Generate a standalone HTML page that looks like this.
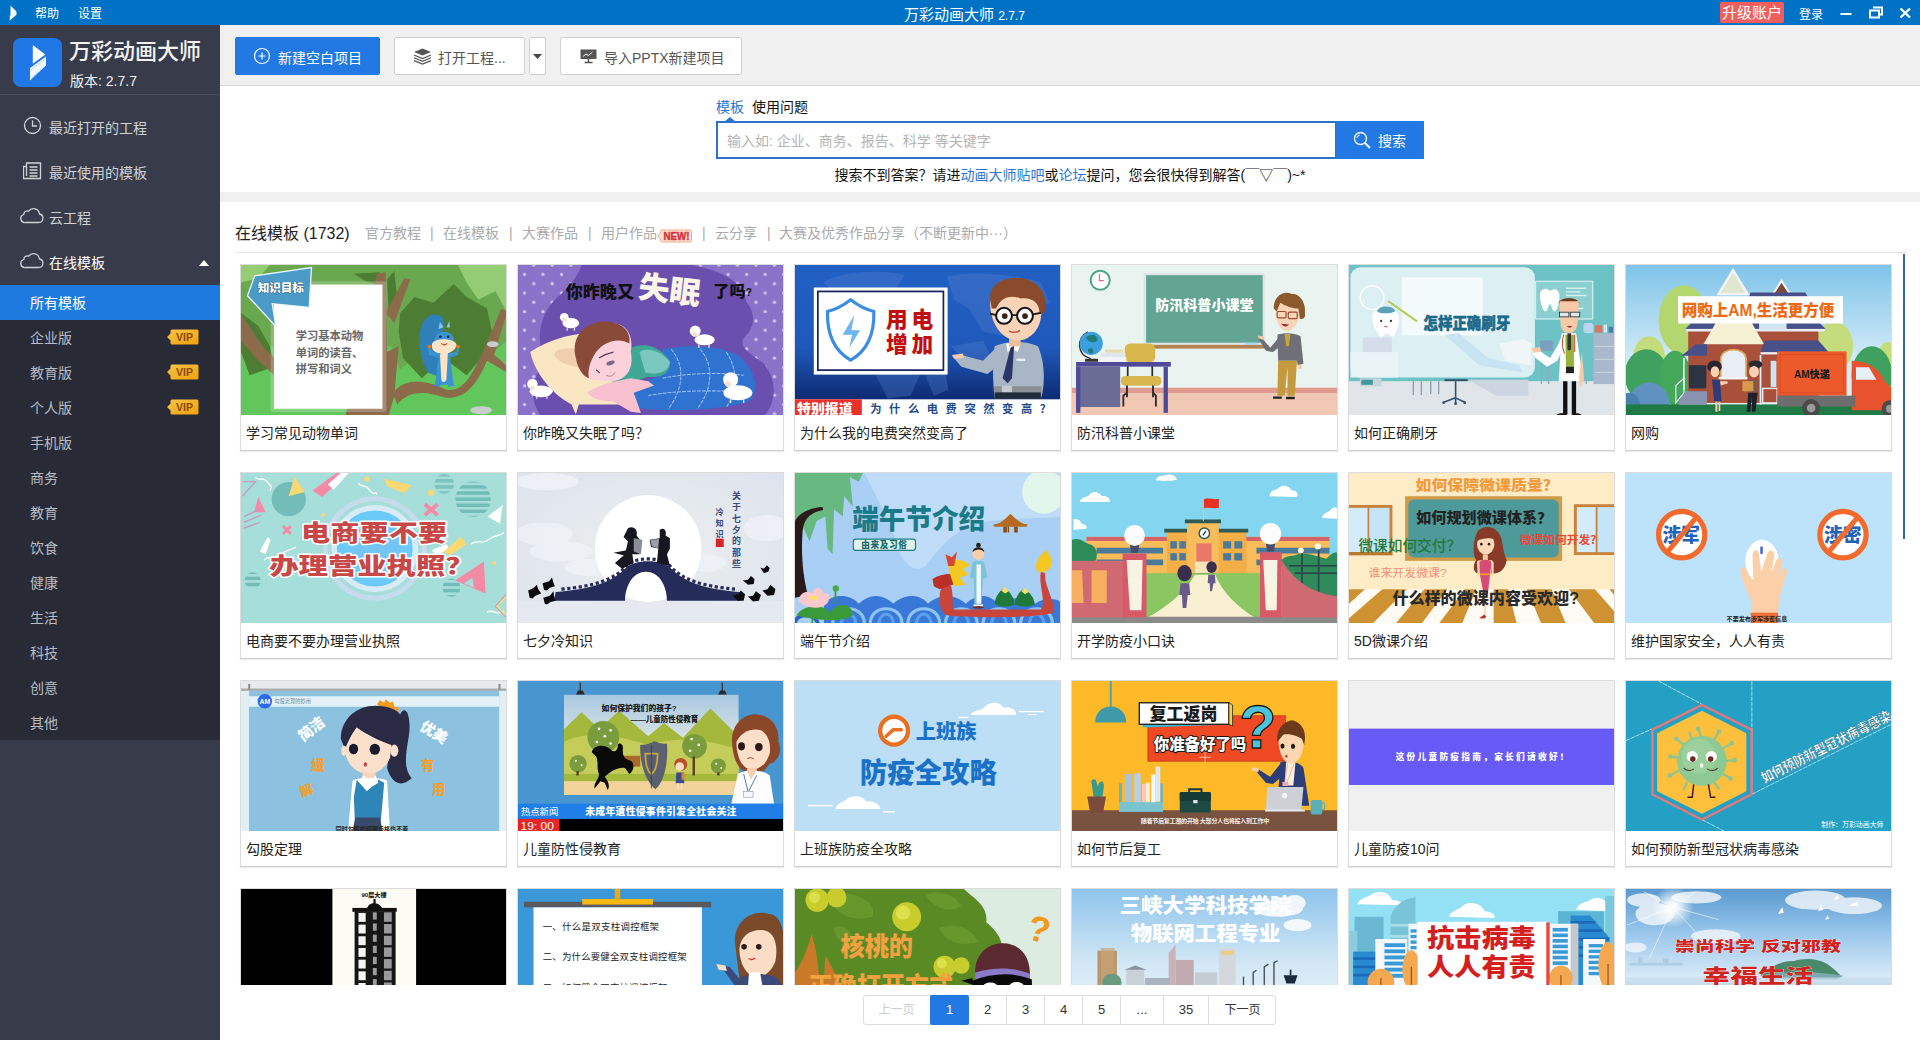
<!DOCTYPE html>
<html lang="zh-CN">
<head>
<meta charset="utf-8">
<title>万彩动画大师 2.7.7</title>
<style>
*{box-sizing:border-box;margin:0;padding:0}
html,body{width:1920px;height:1040px;overflow:hidden;background:#fff}
body{font-family:"Liberation Sans","Noto Sans CJK SC",sans-serif;font-size:14px;color:#222;position:relative}
.abs{position:absolute}
#titlebar{position:absolute;left:0;top:0;width:1920px;height:25px;background:#0072c6;color:#fff;font-size:12px;line-height:25px}
#titlebar span{position:absolute;white-space:nowrap;top:2px}
#sidebar{position:absolute;left:0;top:25px;width:220px;height:1015px;background:#383c4a;color:#d5d7dc}
#brand{position:absolute;left:0;top:0;width:220px;height:70px;border-bottom:1px solid #4b4f5c}
#logo{position:absolute;left:13px;top:13px;width:49px;height:49px;border-radius:8px;background:#1f78e6}
#brand .t1{position:absolute;left:69px;top:10px;font-size:22px;line-height:34px;color:#f2f2f2;white-space:nowrap;font-weight:500}
#brand .t2{position:absolute;left:70px;top:46px;font-size:14px;line-height:20px;color:#f2f2f2;white-space:nowrap}
.nav{position:absolute;left:0;width:220px;height:45px;line-height:45px;font-size:14px;color:#d0d2d8}
.nav .txt{position:absolute;left:49px;top:1px;white-space:nowrap}
.nav svg{position:absolute}
#submenu{position:absolute;left:0;top:260px;width:220px;height:455px;background:#282b36}
.sub{position:absolute;left:0;width:220px;height:35px;line-height:37px;font-size:14px;color:#b9bcc4;padding-left:30px}
.sub.on{background:#1f7ae0;color:#fff}
.vip{position:absolute;left:167px;top:9px;width:32px;height:16px}
#toolbar{position:absolute;left:220px;top:25px;width:1700px;height:61px;background:#f0f0f0;border-bottom:1px solid #dcdcdc}
.btn{position:absolute;top:12px;height:38px;border:1px solid #d0d0d0;border-radius:2px;background:#fff;color:#555;font-size:14px;line-height:36px;white-space:nowrap}
.btn.blue{background:#2279e4;border-color:#2279e4;color:#fff}
.btn span{position:absolute;top:2px}
.btn svg{position:absolute}
#search{position:absolute;left:220px;top:86px;width:1700px;height:106px;background:#fff}
#band{position:absolute;left:220px;top:192px;width:1700px;height:10px;background:#f0f0f0}
#main{position:absolute;left:220px;top:202px;width:1700px;height:783px;background:#fff;overflow:hidden}
#tabs{position:absolute;left:15px;top:0;height:51px;width:1671px;border-bottom:1px solid #e4e4e4;white-space:nowrap}
#tabs .h{position:absolute;left:0;top:20px;font-size:16px;line-height:24px;color:#222}
#tabs .t{position:absolute;top:21px;font-size:14px;line-height:20px;color:#aaa}
.card{position:absolute;width:267px;height:187px;background:#fff;border:1px solid #dcdcdc;border-bottom:1px solid #cfcfcf;box-shadow:0 1px 1px rgba(0,0,0,.08)}
.card svg{position:absolute;left:0;top:0;width:265px;height:150px;display:block}
.card .cap{position:absolute;left:5px;top:158px;font-size:14px;line-height:20px;color:#222;white-space:nowrap}
#pager{position:absolute;left:863px;top:995px;height:30px;width:413px;border:1px solid #ddd;border-radius:3px;background:#fff}
#pager div{position:absolute;top:-1px;height:30px;line-height:29px;text-align:center;font-size:13px;color:#333;border-right:1px solid #ddd}
#pager div.c{font-size:12px;line-height:31px}
#pager div.on{background:#2279e4;color:#fff;border-radius:2px;border-right:none}
svg text{font-family:"Liberation Sans","Noto Sans CJK SC",sans-serif}
</style>
</head>
<body>
<svg width="0" height="0" style="position:absolute"><defs><linearGradient id="vipg" x1="0" y1="0" x2="1" y2="1"><stop offset="0" stop-color="#f8c448"/><stop offset="1" stop-color="#f0a00c"/></linearGradient></defs></svg>
<div id="titlebar">
<svg class="abs" style="left:9px;top:5px" width="9" height="16" viewBox="0 0 9 16"><path d="M1.500 0.500L7.500 6.500L1.500 10.500ZM0.800 10.800L7.500 6.800V9.800L0.800 15.500Z" fill="#fff"/></svg>
<span style="left:35px">帮助</span><span style="left:78px">设置</span>
<span style="left:904px;font-size:15px;top:2px">万彩动画大师 <b style="font-weight:normal;font-size:12px">2.7.7</b></span>
<span style="left:1720px;top:2px;width:64px;height:21px;line-height:22px;background:#f25e5e;border-radius:2px;font-size:15px;text-align:center">升级账户</span>
<span style="left:1799px;top:3px">登录</span>
<svg class="abs" style="left:1840px;top:6px" width="75" height="14" viewBox="0 0 75 14"><rect x="0.5" y="7" width="11" height="2" fill="#fff"/><path d="M33 1.5h9v7h-3M30 4.500h9v7h-9z" fill="none" stroke="#fff" stroke-width="2"/><path d="M60.500 2.500l9.500 9M70 2.500l-9.500 9" stroke="#fff" stroke-width="2.400"/></svg>
</div>

<div id="sidebar">
<div id="brand">
<div id="logo"><svg width="49" height="49" viewBox="0 0 49 49"><path d="M19.800 7L32.300 16.600L19.800 25.800Z" fill="#fff"/><path d="M17 30L33 18.400V27.500L17 42.500Z" fill="#f2f6ff"/><path d="M18.500 31.200L31.500 21.800M18.500 40L31.500 29.500" stroke="#1f78e6" stroke-width="1" stroke-dasharray="1.200 1.600" opacity=".55"/></svg></div>
<div class="t1">万彩动画大师</div>
<div class="t2">版本: 2.7.7</div>
</div>
<div class="nav" style="top:80px"><svg style="left:23px;top:11px" width="19" height="19" viewBox="0 0 19 19"><circle cx="9.500" cy="9.500" r="8" fill="none" stroke="#d0d2d8" stroke-width="1.300"/><path d="M9.500 4.500v5.500h4.500" fill="none" stroke="#d0d2d8" stroke-width="1.300"/></svg><span class="txt">最近打开的工程</span></div>
<div class="nav" style="top:125px"><svg style="left:23px;top:12px" width="19" height="18" viewBox="0 0 19 18"><path d="M3.500 1h14v15.500h-17v-12h3zM3.500 1v13" fill="none" stroke="#d0d2d8" stroke-width="1.300"/><path d="M6.500 5h8M6.500 8h8M6.500 11h8M6.500 14h8" stroke="#d0d2d8" stroke-width="1.500"/></svg><span class="txt">最近使用的模板</span></div>
<div class="nav" style="top:170px"><svg style="left:20px;top:11px" width="24" height="18" viewBox="0 0 24 18"><path d="M5.500 16.500h13a4.300 4.300 0 0 0 1-8.500a6 6 0 0 0-10.800-2.800a3.400 3.400 0 0 0-4.900 3.300A4.100 4.100 0 0 0 5.500 16.500z" fill="none" stroke="#d0d2d8" stroke-width="1.300"/></svg><span class="txt">云工程</span></div>
<div class="nav" style="top:215px"><svg style="left:20px;top:11px" width="24" height="18" viewBox="0 0 24 18"><path d="M5.500 16.500h13a4.300 4.300 0 0 0 1-8.500a6 6 0 0 0-10.800-2.800a3.400 3.400 0 0 0-4.900 3.300A4.100 4.100 0 0 0 5.500 16.500z" fill="none" stroke="#d0d2d8" stroke-width="1.300"/></svg><span class="txt" style="color:#fff">在线模板</span><svg style="left:199px;top:20px" width="10" height="6" viewBox="0 0 12 7"><path d="M0 7L6 0L12 7Z" fill="#fff"/></svg></div>
<div id="submenu">
<div class="sub on" style="top:0">所有模板</div>
<div class="sub" style="top:35px">企业版<svg class="vip" viewBox="0 0 32 16"><path d="M0 8L3.500 4.500V2a1.500 1.500 0 0 1 1.500-1.500H30a1.500 1.500 0 0 1 1.500 1.500V14a1.500 1.500 0 0 1-1.500 1.500H5a1.500 1.500 0 0 1-1.500-1.500V11.500Z" fill="url(#vipg)"/><text x="17.500" y="12" font-size="10.500" font-weight="bold" fill="#8a4a00" text-anchor="middle">VIP</text></svg></div>
<div class="sub" style="top:70px">教育版<svg class="vip" viewBox="0 0 32 16"><path d="M0 8L3.500 4.500V2a1.500 1.500 0 0 1 1.500-1.500H30a1.500 1.500 0 0 1 1.500 1.500V14a1.500 1.500 0 0 1-1.500 1.500H5a1.500 1.500 0 0 1-1.500-1.500V11.500Z" fill="url(#vipg)"/><text x="17.500" y="12" font-size="10.500" font-weight="bold" fill="#8a4a00" text-anchor="middle">VIP</text></svg></div>
<div class="sub" style="top:105px">个人版<svg class="vip" viewBox="0 0 32 16"><path d="M0 8L3.500 4.500V2a1.500 1.500 0 0 1 1.500-1.500H30a1.500 1.500 0 0 1 1.500 1.500V14a1.500 1.500 0 0 1-1.500 1.500H5a1.500 1.500 0 0 1-1.500-1.500V11.500Z" fill="url(#vipg)"/><text x="17.500" y="12" font-size="10.500" font-weight="bold" fill="#8a4a00" text-anchor="middle">VIP</text></svg></div>
<div class="sub" style="top:140px">手机版</div>
<div class="sub" style="top:175px">商务</div>
<div class="sub" style="top:210px">教育</div>
<div class="sub" style="top:245px">饮食</div>
<div class="sub" style="top:280px">健康</div>
<div class="sub" style="top:315px">生活</div>
<div class="sub" style="top:350px">科技</div>
<div class="sub" style="top:385px">创意</div>
<div class="sub" style="top:420px">其他</div>
</div>
</div>

<div id="toolbar">
<div class="btn blue" style="left:15px;width:145px"><svg style="left:17px;top:9px" width="18" height="18" viewBox="0 0 18 18"><circle cx="9" cy="9" r="7.500" fill="none" stroke="#fff" stroke-width="1.200"/><path d="M9 5.500v7M5.500 9h7" stroke="#fff" stroke-width="1.200"/></svg><span style="left:42px">新建空白项目</span></div>
<div class="btn" style="left:174px;width:131px"><svg style="left:18px;top:10px" width="19" height="17" viewBox="0 0 19 17"><path d="M9.500 0.500L18 4L9.500 7.500L1 4Z" fill="#555"/><path d="M1 7L9.500 10.500L18 7M1 9.800L9.500 13.300L18 9.800M1 12.600L9.500 16.100L18 12.600" fill="none" stroke="#555" stroke-width="1.200"/></svg><span style="left:43px">打开工程...</span></div>
<div class="btn" style="left:309px;width:17px"><svg style="left:3px;top:16px" width="9" height="5" viewBox="0 0 9 5"><path d="M0 0H9L4.500 5Z" fill="#444"/></svg></div>
<div class="btn" style="left:340px;width:182px"><svg style="left:19px;top:11px" width="17" height="15" viewBox="0 0 17 15"><rect x="0.500" y="0.500" width="16" height="9.500" fill="#555"/><path d="M3 7.500l3-2.500l2.500 1.500l4-3.500" stroke="#fff" stroke-width="1" fill="none"/><path d="M8.500 10v3M4.500 13.500h8" stroke="#555" stroke-width="1.600"/></svg><span style="left:43px">导入PPTX新建项目</span></div>
</div>

<div id="search">
<span class="abs" style="left:496px;top:11px;line-height:20px;color:#2a78d2">模板</span>
<span class="abs" style="left:532px;top:11px;line-height:20px;color:#111">使用问题</span>
<svg class="abs" style="left:504px;top:31px" width="12" height="5" viewBox="0 0 12 5"><path d="M0 5L6 0L12 5Z" fill="#2a72cc"/></svg>
<div class="abs" style="left:496px;top:35px;width:621px;height:38px;border:2px solid #2a72cc;background:#fff"></div>
<span class="abs" style="left:507px;top:45px;line-height:20px;color:#b4b4b4;white-space:nowrap">输入如: 企业、商务、报告、科学 等关键字</span>
<div class="abs" style="left:1116px;top:35px;width:88px;height:38px;background:#2279e4;color:#fff;line-height:38px"><svg class="abs" style="left:17px;top:10px" width="18" height="18" viewBox="0 0 18 18"><circle cx="7.500" cy="7.500" r="6" fill="none" stroke="#fff" stroke-width="1.300"/><path d="M3.800 7a3.800 3.800 0 0 1 3-3" fill="none" stroke="#fff" stroke-width="1"/><path d="M12 12l5 5" stroke="#fff" stroke-width="1.800"/></svg><span class="abs" style="left:42px;top:1px">搜索</span></div>
<div class="abs" style="left:0;top:79px;width:1700px;text-align:center;line-height:20px;color:#111;white-space:nowrap">搜索不到答案？请进<span style="color:#2a78d2">动画大师贴吧</span>或<span style="color:#2a78d2">论坛</span>提问，您会很快得到解答(￣▽￣)~*</div>
</div>
<div id="band"></div>

<div id="main">
<div id="tabs">
<span class="h">在线模板 (1732)</span>
<span class="t" style="left:130px">官方教程</span><span class="t" style="left:195px">|</span>
<span class="t" style="left:208px">在线模板</span><span class="t" style="left:274px">|</span>
<span class="t" style="left:287px">大赛作品</span><span class="t" style="left:353px">|</span>
<span class="t" style="left:366px">用户作品</span>
<svg class="abs" style="left:422px;top:25px" width="36" height="16" viewBox="0 0 36 16"><path d="M0.500 9L3.500 6V4.500a1.500 1.500 0 0 1 1.500-1.500H33a1.500 1.500 0 0 1 1.500 1.500V13.500a1.500 1.500 0 0 1-1.500 1.500H5a1.500 1.500 0 0 1-1.500-1.500V12Z" fill="#fde6d6" stroke="#f0a888" stroke-width="1"/><text x="19.500" y="12.600" font-size="10.500" font-weight="bold" fill="#d8303e" stroke="#d8303e" stroke-width=".5" text-anchor="middle" textLength="26" lengthAdjust="spacingAndGlyphs">NEW!</text></svg>
<span class="t" style="left:467px">|</span>
<span class="t" style="left:480px">云分享</span><span class="t" style="left:532px">|</span>
<span class="t" style="left:544px">大赛及优秀作品分享（不断更新中···）</span>
</div>
<div class="card" style="left:20px;top:62px"><svg viewBox="0 0 266 150" preserveAspectRatio="none"><g transform="scale(0.1452)">
<rect width="1840" height="1040" fill="#62c65c"/>
<path d="M0 0H1840V520L1700 640L1560 560L1420 700L1250 600L1100 720L1040 560L0 560Z" fill="#6aa84f"/>
<path d="M1100 330L1200 220L1330 260L1470 130L1560 220L1700 300L1740 480L1700 600L1560 760L1400 640L1250 780L1120 640L1090 460Z" fill="#4c7d33"/><path d="M1010 100L1060 40L1080 240L1020 300Z" fill="#4c7d33"/>
<path d="M0 330L120 420L200 560L230 700L60 760L0 600Z" fill="#4c7d33"/>
<path d="M1500 0H1840V330L1760 180L1640 240L1560 120Z" fill="#93cc72"/>
<path d="M0 0H200L120 90L0 120Z" fill="#93cc72"/>
<path d="M780 60L960 50L940 130L860 110Z" fill="#4c7d33"/>
<path d="M940 60L1000 50L1010 600L1090 560L1060 900L1020 1040H720L760 900Z" fill="#8b6b4a"/>
<path d="M1000 330L1130 90L1170 100L1060 400Z" fill="#8b6b4a"/>
<path d="M1050 880C1150 760 1300 800 1420 860C1560 880 1620 700 1690 560L1800 300L1840 320L1750 620C1800 660 1840 680 1840 740L1700 660C1640 800 1560 940 1400 910C1280 870 1160 860 1080 960Z" fill="#8b6b4a"/>
<path d="M0 340L150 560L230 640V760L100 640L0 520Z" fill="#8b6b4a"/>
<ellipse cx="1660" cy="1000" rx="75" ry="28" fill="#c9cdd0"/>
<ellipse cx="1740" cy="545" rx="40" ry="20" fill="#c9cdd0"/>
<path d="M1290 740C1200 560 1220 360 1330 340C1400 335 1420 400 1400 440L1360 520L1400 780Z" fill="#2f7fb8"/>
<path d="M1340 520C1330 440 1480 440 1470 520C1500 560 1470 600 1440 600L1470 820L1340 830L1370 600C1320 600 1310 560 1340 520Z" fill="#3b93cf"/>
<path d="M1365 440L1375 390L1400 430ZM1445 430L1440 385L1420 430Z" fill="#8cc4e8"/>
<path d="M1320 545C1330 500 1470 500 1490 545C1490 590 1440 600 1430 610L1420 790C1410 810 1390 810 1385 790L1375 610C1340 600 1315 590 1320 545Z" fill="#fbe3c5"/>
<path d="M1290 560L1330 600L1380 610L1370 640L1300 620ZM1510 560L1480 600L1430 610L1440 640L1500 620Z" fill="#3b93cf"/>
<circle cx="1303" cy="562" r="13" fill="#e8742c"/><circle cx="1500" cy="562" r="13" fill="#e8742c"/>
<path d="M1325 830L1370 800L1380 840ZM1480 830L1440 800L1430 840Z" fill="#3b93cf"/>
<circle cx="1378" cy="495" r="9" fill="#1c2a44"/><circle cx="1432" cy="495" r="9" fill="#1c2a44"/>
<path d="M1385 540Q1405 560 1425 540" stroke="#b8452a" stroke-width="7" fill="none"/>
<rect x="205" y="112" width="800" height="900" rx="14" fill="#fff" opacity=".22"/>
<rect x="228" y="135" width="750" height="855" fill="#fff"/>
<path d="M45 212L95 75L487 18L472 292L216 266L240 422Z" fill="#4a9bc8" stroke="#eaf6fb" stroke-width="9" stroke-linejoin="miter"/>
<text x="275" y="188" font-size="80" font-weight="900" fill="#fff" stroke="#2b4a5c" stroke-width="5" paint-order="stroke" text-anchor="middle">知识目标</text>
<text x="378" y="514" font-size="78" font-weight="700" fill="#666">学习基本动物</text>
<text x="378" y="632" font-size="78" font-weight="700" fill="#666">单词的读音、</text>
<text x="378" y="746" font-size="78" font-weight="700" fill="#666">拼写和词义</text>
</g></svg><div class="cap">学习常见动物单词</div></div>
<div class="card" style="left:297px;top:62px"><svg viewBox="0 0 266 150" preserveAspectRatio="none"><defs><pattern id="dots1" width="128" height="128" patternUnits="userSpaceOnUse"><circle cx="45" cy="65" r="11" fill="#d6caf2"/><circle cx="109" cy="129" r="11" fill="#d6caf2"/><circle cx="109" cy="1" r="11" fill="#d6caf2"/></pattern></defs>
<g transform="scale(0.1452)">
<rect width="1840" height="1040" fill="#8a72c8"/>
<rect width="1840" height="1040" fill="url(#dots1)"/>
<path d="M440 0H1200C1420 40 1560 120 1580 260C1640 320 1640 420 1580 480C1500 560 1600 600 1700 680C1800 800 1780 960 1700 1040H160C60 900 100 760 200 660C100 520 160 300 300 200C380 120 420 60 440 0Z" fill="#6a4fae"/>
<path d="M85 600C200 520 340 480 470 470L760 560L820 960L420 960L400 1030L370 960C250 900 120 760 85 600Z" fill="#fbe6c4"/>
<ellipse cx="400" cy="640" rx="150" ry="60" fill="#efcfae" transform="rotate(12 400 640)"/>
<path d="M1000 580C1200 540 1400 560 1520 620C1640 720 1680 860 1600 940C1400 1000 1100 1010 860 990L740 940L640 880L1000 760Z" fill="#2f72cf"/>
<path d="M1060 580C1160 700 1140 860 1040 990M1260 580C1360 700 1340 860 1240 990M1440 600C1520 720 1520 860 1440 980M1000 780C1200 740 1400 740 1560 760M900 900C1100 860 1400 860 1620 880" stroke="#9cc3f5" stroke-width="7" fill="none" stroke-dasharray="26 8"/>
<path d="M780 570C880 530 980 560 1050 660C1060 740 1000 780 900 770L760 820L640 860L610 840L770 700Z" fill="#3fa894"/>
<path d="M840 600C900 560 1000 600 1050 670C1040 740 960 760 880 740Z" fill="#7cc8c0"/>
<path d="M420 620C420 500 520 400 640 400C760 400 800 500 780 600C800 700 760 790 660 800L500 790C440 740 420 680 420 620Z" fill="#fbd2dc"/>
<path d="M400 640C360 480 480 380 620 390C740 400 780 470 770 540C700 500 600 520 540 600C500 660 480 720 490 780C440 760 410 700 400 640Z" fill="#8a4a3a"/>
<path d="M560 640Q610 610 660 600M540 720L565 745" stroke="#5a3a5a" stroke-width="8" fill="none"/>
<ellipse cx="640" cy="675" rx="30" ry="14" fill="#7a6a8a" transform="rotate(-20 640 675)"/>
<path d="M610 760Q650 780 670 740" stroke="#c86a7a" stroke-width="6" fill="none"/>
<path d="M480 880C560 820 680 800 780 780L900 800L940 830L800 880L850 1020L780 1010L660 940C580 940 500 920 480 880Z" fill="#f9c0d0"/>
<g fill="#fff"><ellipse cx="365" cy="400" rx="58" ry="36"/><circle cx="320" cy="360" r="30"/><ellipse cx="1290" cy="515" rx="70" ry="38"/><circle cx="1225" cy="455" r="38"/><ellipse cx="1520" cy="880" rx="100" ry="52"/><circle cx="1470" cy="790" r="52"/><ellipse cx="160" cy="870" rx="80" ry="40"/><circle cx="100" cy="820" r="36"/></g>
<g fill="#fbe0c8"><circle cx="318" cy="378" r="14"/><circle cx="1222" cy="478" r="16"/><circle cx="1452" cy="820" r="20"/><circle cx="100" cy="846" r="15"/></g>
<path d="M340 430v22M390 430v22M1250 545v26M1320 545v26M1470 920v30M1560 920v30M130 900v22M200 900v22" stroke="#e8e0f0" stroke-width="9"/>
<text x="330" y="228" font-size="118" font-weight="900" fill="#111" font-family="'Noto Serif CJK SC','Liberation Serif',serif">你昨晚又</text>
<text x="1350" y="222" font-size="112" font-weight="900" fill="#111" font-family="'Noto Serif CJK SC','Liberation Serif',serif">了吗<tspan font-size="70" dy="-6">?</tspan></text>
<text x="830" y="250" font-size="215" font-weight="900" fill="#fdf6e8" font-family="'Noto Sans CJK SC',sans-serif" transform="rotate(7 1050 200)">失眠</text>
</g></svg><div class="cap">你昨晚又失眠了吗？</div></div>
<div class="card" style="left:574px;top:62px"><svg viewBox="0 0 266 150" preserveAspectRatio="none"><defs><linearGradient id="g2" x1="0" y1="0" x2="0" y2="1"><stop offset="0" stop-color="#2260c4"/><stop offset=".55" stop-color="#1f58ba"/><stop offset="1" stop-color="#081c5c"/></linearGradient></defs>
<g transform="scale(0.1452)">
<rect width="1840" height="1040" fill="url(#g2)"/>
<g fill="#5a86d0" opacity=".3"><path d="M200 120C320 40 600 30 760 70L700 160L560 200L400 160L280 200Z"/><path d="M1050 80C1200 40 1500 60 1700 120L1760 260L1600 330L1500 500L1300 460L1200 300L1100 240Z"/><path d="M560 760L720 700L860 760L800 900L640 920Z"/><path d="M1080 560L1300 520L1360 640L1200 700Z"/><path d="M900 760L1040 740L1060 860L960 900Z"/></g>
<rect x="130" y="155" width="925" height="600" fill="#fff"/>
<rect x="158" y="182" width="868" height="542" fill="none" stroke="#16255f" stroke-width="12"/>
<path d="M385 240C450 290 500 310 545 320C550 480 500 590 385 655C270 590 220 480 225 320C270 310 320 290 385 240Z" fill="#fff" stroke="#3a8de0" stroke-width="22"/>
<path d="M410 345L330 480H395L375 570L450 450H390Z" fill="#6fb5ee"/>
<text x="630" y="425" font-size="150" font-weight="900" fill="#c01010" letter-spacing="26">用电</text>
<text x="630" y="600" font-size="150" font-weight="900" fill="#c01010" letter-spacing="26">增加</text>
<path d="M1380 560C1460 520 1600 520 1680 560C1740 700 1720 860 1700 920H1380C1370 820 1360 700 1380 560Z" fill="#a9b6c6"/>
<path d="M1390 570L1300 660L1150 620L1090 630L1150 700L1330 750L1420 680Z" fill="#a9b6c6"/>
<path d="M1085 620L1160 610L1170 640L1100 645Z" fill="#f6c9a8"/>
<path d="M1460 540L1560 540L1540 600L1500 580L1470 600Z" fill="#fff"/>
<path d="M1490 570L1515 555L1500 780L1470 815L1435 780Z" fill="#2a3568"/>
<rect x="1375" y="835" width="330" height="42" fill="#8b8f96"/><rect x="1430" y="832" width="70" height="48" fill="#c8ccd2"/>
<rect x="1380" y="877" width="320" height="45" fill="#1e2c3c"/>
<rect x="1530" y="645" width="60" height="16" fill="#e8edf2"/>
<path d="M1480 470H1560V560H1480Z" fill="#eebf9c"/>
<path d="M1350 290C1340 180 1440 110 1560 130C1680 150 1720 260 1700 360C1690 450 1620 520 1540 520C1440 520 1360 420 1350 290Z" fill="#f8d3b5"/>
<path d="M1350 240C1340 130 1440 80 1560 90C1700 110 1760 220 1720 340L1690 330C1690 260 1640 220 1560 230C1480 200 1420 230 1390 300L1360 300Z" fill="#8a4a2c"/>
<circle cx="1445" cy="350" r="55" fill="#fff" stroke="#15151c" stroke-width="14"/><circle cx="1590" cy="350" r="55" fill="#fff" stroke="#15151c" stroke-width="14"/>
<path d="M1500 345H1535M1645 340L1700 330M1390 345L1350 335" stroke="#15151c" stroke-width="12"/>
<circle cx="1450" cy="352" r="20" fill="#3a2418"/><circle cx="1590" cy="352" r="20" fill="#3a2418"/>
<path d="M1480 455Q1520 475 1555 450" stroke="#b0503a" stroke-width="10" fill="none"/>
<rect x="0" y="925" width="1840" height="115" fill="#fff"/>
<rect x="0" y="925" width="462" height="115" fill="#e8302c"/>
<text x="14" y="1022" font-size="88" font-weight="900" fill="#fff" textLength="385" lengthAdjust="spacingAndGlyphs">特别报道</text>
<text x="520" y="1022" font-size="78" font-weight="700" fill="#1c4a8a" textLength="1250" lengthAdjust="spacing">为什么电费突然变高？</text>
</g></svg><div class="cap">为什么我的电费突然变高了</div></div>
<div class="card" style="left:851px;top:62px"><svg viewBox="0 0 266 150" preserveAspectRatio="none"><g transform="scale(0.1452)">
<rect width="1840" height="1040" fill="#e9f4f0"/>
<rect x="0" y="845" width="1840" height="40" fill="#e09a8e"/>
<rect x="0" y="885" width="1840" height="155" fill="#f0c8b4"/>
<circle cx="195" cy="105" r="66" fill="#fff" stroke="#4fa58a" stroke-width="14"/>
<path d="M190 60V108H220" stroke="#e86a7a" stroke-width="8" fill="none"/>
<rect x="495" y="55" width="840" height="500" fill="#dde6e4"/>
<rect x="512" y="70" width="806" height="465" fill="#62a592"/>
<rect x="560" y="550" width="800" height="26" fill="#b5834f"/>
<rect x="1200" y="536" width="85" height="14" fill="#a8d8f0"/>
<text x="915" y="312" font-size="92" font-weight="900" fill="#fff" text-anchor="middle" textLength="680" lengthAdjust="spacingAndGlyphs">防汛科普小课堂</text>
<rect x="365" y="540" width="210" height="130" rx="36" fill="#d8b74c"/>
<path d="M385 670V780M555 670V780" stroke="#2e2e2e" stroke-width="12"/>
<rect x="338" y="765" width="280" height="66" rx="30" fill="#d8b74c"/>
<path d="M380 830V880L355 900V975M560 830V880L580 900V975M380 850V910M560 850V910" stroke="#2e2e2e" stroke-width="13" fill="none"/>
<rect x="28" y="668" width="655" height="32" fill="#4f4a98"/>
<rect x="28" y="700" width="305" height="278" fill="#6a6c96"/>
<rect x="28" y="700" width="30" height="318" fill="#4f4a98"/>
<rect x="633" y="700" width="30" height="318" fill="#4f4a98"/>
<rect x="228" y="582" width="125" height="22" fill="#e8dcae"/>
<rect x="200" y="606" width="170" height="28" fill="#dfe6ec"/>
<rect x="186" y="634" width="190" height="30" fill="#f2f4f6"/>
<path d="M110 460C30 500 30 620 130 645" stroke="#333" stroke-width="10" fill="none"/>
<circle cx="133" cy="540" r="80" fill="#3b9fe0"/>
<path d="M95 500C130 470 180 480 175 520C150 540 120 540 95 500ZM110 580C140 560 160 590 140 610C120 610 110 600 110 580Z" fill="#1f7a78"/>
<rect x="90" y="645" width="90" height="22" rx="6" fill="#333"/>
<path d="M1420 480C1470 465 1530 465 1580 490L1600 680L1560 690L1555 660H1425Z" fill="#6f6f78"/>
<path d="M1430 500L1370 570L1310 500L1290 510L1340 590L1390 600L1440 560Z" fill="#6f6f78"/>
<path d="M1285 485L1330 495L1320 515L1290 505Z" fill="#f5c8a4"/>
<path d="M1470 475H1510L1500 560L1480 560Z" fill="#c9a23c"/>
<path d="M1425 660H1555L1540 900H1490L1490 700L1470 900H1420Z" fill="#c59a3e"/>
<path d="M1390 905H1450V922H1390ZM1480 908H1540V925H1480Z" fill="#222"/>
<rect x="1565" y="685" width="22" height="30" fill="#f5c8a4"/>
<path d="M1410 330C1400 250 1460 220 1510 225C1560 230 1580 280 1570 350C1560 420 1520 460 1480 455C1440 450 1415 400 1410 330Z" fill="#f8d5b8"/>
<path d="M1395 300C1390 220 1460 170 1520 200C1570 190 1620 260 1610 330C1620 360 1590 380 1575 370L1565 300C1520 300 1470 280 1440 260L1415 320Z" fill="#8a5a2c"/>
<rect x="1418" y="320" width="62" height="44" rx="8" fill="none" stroke="#9a4a2a" stroke-width="8"/><rect x="1495" y="325" width="62" height="44" rx="8" fill="none" stroke="#9a4a2a" stroke-width="8"/>
<path d="M1445 405Q1475 440 1500 410Z" fill="#a02a2a"/>
</g></svg><div class="cap">防汛科普小课堂</div></div>
<div class="card" style="left:1128px;top:62px"><svg viewBox="0 0 266 150" preserveAspectRatio="none"><g transform="scale(0.1452)">
<rect width="1840" height="1040" fill="#6cc2c4"/>
<rect x="0" y="800" width="1840" height="240" fill="#dfe5e8"/>
<rect x="1290" y="112" width="395" height="260" fill="#8ccfd0" stroke="#d8f0f0" stroke-width="8"/>
<path d="M1320 200C1330 150 1380 160 1390 180C1410 160 1450 160 1455 210C1455 260 1440 320 1420 320C1405 320 1400 270 1390 270C1378 270 1375 320 1358 320C1340 320 1320 260 1320 200Z" fill="#fff"/>
<path d="M1500 160H1640M1500 185H1600M1500 210H1640M1500 300H1620" stroke="#d8f0f0" stroke-width="10"/>
<rect x="1690" y="470" width="150" height="350" fill="#a9b8cc"/>
<path d="M1700 560H1840M1700 650H1840M1700 740H1840" stroke="#c5d0de" stroke-width="8"/>
<rect x="1620" y="400" width="70" height="70" rx="20" fill="#b8d8f0"/><rect x="1700" y="415" width="50" height="50" fill="#e8705a"/><rect x="1760" y="410" width="24" height="55" fill="#d0e8f0"/><rect x="1795" y="425" width="30" height="40" fill="#4a7ab0"/>
<path d="M1330 640V820M1380 640V820M1640 780V820" stroke="#8fb0b8" stroke-width="10"/>
<rect x="1320" y="520" width="90" height="70" fill="#7aa0c0"/>
<rect x="660" y="786" width="160" height="14" fill="#34506e"/>
<path d="M737 800V915M737 915L655 945M737 915L800 945M737 915V950" stroke="#34506e" stroke-width="11" fill="none"/>
<circle cx="655" cy="948" r="10" fill="#34506e"/><circle cx="800" cy="948" r="10" fill="#34506e"/><circle cx="737" cy="955" r="10" fill="#34506e"/>
<path d="M445 800V895M500 800V895M565 800V890M620 800V890" stroke="#8a9cb0" stroke-width="9"/>
<path d="M820 790H1240V900H1020Z" fill="#cdd5e0"/>
<rect x="75" y="780" width="150" height="55" fill="#c8d4dc"/><rect x="85" y="790" width="80" height="35" fill="#3f9a9c"/>
<rect x="10" y="15" width="1275" height="760" rx="70" fill="#e4f3f6" opacity=".93"/>
<rect x="365" y="85" width="560" height="400" fill="#f3fafc"/>
<path d="M660 480L900 690L1200 740L1180 690L960 640L760 470Z" fill="#c8e4f2"/>
<path d="M1040 540L1200 510L1260 540V690L1080 660Z" fill="#f0f6f8"/>
<rect x="95" y="500" width="200" height="110" fill="#d5dcea"/>
<rect x="10" y="600" width="330" height="175" fill="#e9f3f6"/>
<circle cx="160" cy="225" r="82" fill="none" stroke="#fff" stroke-width="9"/>
<path d="M165 330C200 300 300 300 340 335C360 400 330 440 310 490C290 500 275 470 262 470C248 470 235 500 215 492C190 450 150 400 165 330Z" fill="#fff"/>
<path d="M195 320C200 280 290 270 320 315C310 335 215 340 195 320Z" fill="#5ba3b4"/>
<circle cx="222" cy="385" r="8" fill="#334"/><circle cx="290" cy="385" r="8" fill="#334"/><path d="M240 420Q255 440 272 420Z" fill="#e0607a"/>
<path d="M270 248L470 388" stroke="#b4cc4e" stroke-width="14"/>
<text x="515" y="440" font-size="110" font-weight="900" fill="#1c6a8a" stroke="#1c6a8a" stroke-width="4" textLength="600" lengthAdjust="spacingAndGlyphs">怎样正确刷牙</text>
<path d="M1475 480L1440 560L1390 640L1330 600L1310 570L1260 585L1290 640L1370 700L1440 660L1470 600Z" fill="#fff"/>
<path d="M1258 575L1320 565L1330 600L1275 605Z" fill="#f6caa6"/>
<path d="M1470 470H1570L1620 800H1450Z" fill="#fff"/>
<path d="M1495 480H1555V700H1500Z" fill="#96b43a"/>
<rect x="1500" y="700" width="55" height="45" fill="#222"/>
<path d="M1510 470H1535V580L1522 590L1510 580Z" fill="#333"/>
<path d="M1485 480C1470 520 1470 560 1490 610M1560 480V600" stroke="#c8452c" stroke-width="7" fill="none"/>
<path d="M1610 600L1625 780L1600 850L1590 780Z" fill="#f6caa6"/>
<path d="M1480 800H1510V1030H1480ZM1540 800H1570V1030H1540Z" fill="#111"/>
<path d="M1430 1040C1440 1015 1500 1015 1515 1040ZM1535 1040C1545 1015 1600 1015 1615 1040Z" fill="#111"/>
<path d="M1455 260C1455 230 1590 230 1590 260L1580 400C1575 450 1550 470 1520 470C1490 470 1465 450 1462 400Z" fill="#f6caa6"/>
<path d="M1450 270C1445 215 1595 215 1592 270L1585 250H1460Z" fill="#6e3a1e"/>
<rect x="1455" y="325" width="65" height="32" fill="#dfe9ee" stroke="#333" stroke-width="6"/><rect x="1530" y="325" width="65" height="32" fill="#dfe9ee" stroke="#333" stroke-width="6"/>
<path d="M1505 420Q1525 445 1545 420Z" fill="#a8302a"/>
</g></svg><div class="cap">如何正确刷牙</div></div>
<div class="card" style="left:1405px;top:62px"><svg viewBox="0 0 266 150" preserveAspectRatio="none"><defs><linearGradient id="g5" x1="0" y1="0" x2="0" y2="1"><stop offset="0" stop-color="#7fc4ea"/><stop offset=".6" stop-color="#cfe9f6"/><stop offset="1" stop-color="#e8f4f8"/></linearGradient></defs>
<g transform="scale(0.1452)">
<rect width="1840" height="1040" fill="url(#g5)"/>
<ellipse cx="400" cy="380" rx="175" ry="240" fill="#b4d66e"/>
<ellipse cx="1440" cy="560" rx="130" ry="170" fill="#c4dc7c"/>
<ellipse cx="160" cy="640" rx="110" ry="150" fill="#c4dc7c"/>
<ellipse cx="1810" cy="650" rx="70" ry="120" fill="#c4dc7c"/>
<ellipse cx="140" cy="760" rx="150" ry="180" fill="#3fa060"/>
<ellipse cx="340" cy="780" rx="110" ry="190" fill="#43a85a"/>
<ellipse cx="1700" cy="760" rx="140" ry="200" fill="#3fa060"/>
<ellipse cx="160" cy="950" rx="140" ry="140" fill="#5f92c0"/>
<ellipse cx="20" cy="980" rx="80" ry="100" fill="#4a80b0"/>
<rect x="0" y="960" width="1840" height="80" fill="#1f7a45"/>
<path d="M640 200L740 35L840 200Z" fill="#e0e6d0" stroke="#f4f6fa" stroke-width="16"/>
<path d="M1010 210L1075 110L1140 210Z" fill="#7a4a3a" stroke="#f4f6fa" stroke-width="14"/>
<path d="M860 190H1240L1280 260H840Z" fill="#48508a"/>
<rect x="430" y="430" width="900" height="520" fill="#a8503a"/>
<path d="M410 440L450 400H1340L1380 440Z" fill="#48508a"/>
<rect x="415" y="440" width="960" height="18" fill="#e8ecf4"/>
<rect x="650" y="395" width="190" height="50" fill="#cfe4f0"/>
<rect x="920" y="395" width="190" height="50" fill="#cfe4f0"/>
<path d="M535 545L620 400H870L955 545Z" fill="#f6f0d4"/>
<path d="M385 625L480 545H560V625Z" fill="#48508a"/>
<path d="M930 600L960 520H1330L1400 600Z" fill="#48508a"/>
<rect x="930" y="600" width="470" height="16" fill="#e8ecf4"/>
<path d="M655 780V650C655 560 830 560 830 650V780Z" fill="#e8eef4" stroke="#d8a85a" stroke-width="12"/>
<rect x="640" y="770" width="200" height="18" fill="#f4f4f4"/>
<rect x="435" y="690" width="120" height="160" fill="#2c3444"/>
<path d="M400 640V860M930 620V960" stroke="#e8ecf4" stroke-width="12"/>
<path d="M360 960L400 870H560V960Z" fill="#8a94b0"/>
<path d="M345 830L400 780V880L345 950Z" fill="none" stroke="#e8ecf4" stroke-width="8"/>
<rect x="945" y="850" width="100" height="100" fill="none" stroke="#e8ecf4" stroke-width="10"/>
<rect x="1000" y="660" width="40" height="180" fill="#cfe4f0"/>
<path d="M1560 660C1660 660 1740 700 1790 800L1840 850V1000H1560Z" fill="#e8522c"/>
<path d="M1590 705H1680L1730 790H1590Z" fill="#e4f0f6"/>
<rect x="1045" y="595" width="480" height="305" fill="#ec5a2c"/>
<rect x="1065" y="615" width="440" height="265" fill="none" stroke="#d84a20" stroke-width="6"/>
<rect x="1045" y="900" width="540" height="75" fill="#6e6e6e"/>
<circle cx="1280" cy="985" r="62" fill="#4a4a4a"/><circle cx="1280" cy="985" r="30" fill="#9a9a9a"/>
<circle cx="1825" cy="990" r="58" fill="#4a4a4a"/><circle cx="1825" cy="990" r="28" fill="#9a9a9a"/>
<text x="1285" y="780" font-size="70" font-weight="900" fill="#1a1a1a" text-anchor="middle">AM快递</text>
<ellipse cx="612" cy="700" rx="50" ry="42" fill="#2a2430"/>
<ellipse cx="615" cy="735" rx="30" ry="38" fill="#f8d0b4"/>
<path d="M595 790H650L660 940H610Z" fill="#2c3a78"/>
<path d="M650 800L700 800L705 815L655 830Z" fill="#f8d0b4"/>
<path d="M618 940H632V1010H618ZM640 940H652V1005H640Z" fill="#f8d0b4"/>
<ellipse cx="895" cy="685" rx="48" ry="28" fill="#2a2a34"/>
<ellipse cx="885" cy="735" rx="34" ry="40" fill="#f8d0b4"/>
<path d="M850 790H915L910 880H845Z" fill="#7a5a4a"/>
<rect x="805" y="800" width="75" height="70" fill="#d89a4a"/>
<path d="M845 880H910L895 1010H870L868 900L860 1010H835Z" fill="#1e2028"/>
<rect x="360" y="215" width="1140" height="188" fill="#fff"/>
<text x="385" y="352" font-size="112" font-weight="900" fill="#ec6a14" textLength="1055" lengthAdjust="spacingAndGlyphs">网购上AM,生活更方便</text>
</g></svg><div class="cap">网购</div></div>
<div class="card" style="left:20px;top:270px"><svg viewBox="0 0 266 150" preserveAspectRatio="none"><defs><pattern id="st6" width="40" height="42" patternUnits="userSpaceOnUse"><rect width="40" height="24" fill="#74bcb8"/></pattern></defs>
<g transform="scale(0.1452)">
<rect width="1840" height="1040" fill="#a6deda"/>
<circle cx="330" cy="180" r="118" fill="#74bcb8"/>
<circle cx="1605" cy="180" r="122" fill="url(#st6)"/>
<circle cx="1405" cy="75" r="68" fill="url(#st6)" opacity=".8"/>
<circle cx="80" cy="740" r="56" fill="url(#st6)"/>
<circle cx="1455" cy="790" r="62" fill="url(#st6)"/>
<path d="M495 120L660 0H745L560 165Z" fill="#f48aa6"/><path d="M600 80L690 0H745L640 115Z" fill="#fff"/>
<path d="M990 40L1180 85L1130 140L1010 90Z" fill="#fbd872"/>
<path d="M330 160L370 25L440 130Z" fill="#fbd872"/>
<path d="M90 270L120 165L170 270Z" fill="#f48aa6"/>
<path d="M1705 300L1810 220L1790 350Z" fill="#fff"/>
<path d="M130 540L185 440L205 460L170 560Z" fill="#fff"/>
<path d="M1320 530L1420 490L1440 520L1350 570Z" fill="#fff"/><path d="M1400 540L1520 440L1560 490L1440 570Z" fill="#fbd872"/>
<path d="M1480 740L1680 610L1690 830Z" fill="#f48aa6"/><path d="M1540 760L1600 720L1610 790Z" fill="#a6deda"/>
<path d="M1270 215L1360 290M1360 215L1270 290" stroke="#f48aa6" stroke-width="26"/>
<path d="M290 365L345 420M345 365L290 420" stroke="#f48aa6" stroke-width="20"/>
<circle cx="1315" cy="135" r="22" fill="#fbd872"/><circle cx="870" cy="40" r="18" fill="#fbd872"/><circle cx="1750" cy="620" r="14" fill="#fbd872"/><circle cx="570" cy="290" r="12" fill="#fbd872"/>
<path d="M100 30C130 60 150 20 180 60S220 80 200 120M810 70C840 110 860 70 890 120S930 110 940 150M1590 490C1640 450 1660 500 1710 460S1780 440 1820 410M160 600C200 560 240 600 280 560S340 540 380 510M1700 960C1740 930 1760 990 1820 950" stroke="#fff" stroke-width="9" fill="none"/>
<path d="M10 60L100 60L10 160M20 300L130 250M20 340L140 290M20 380L130 340M1840 830L1760 920L1840 1000" stroke="#c89ac0" stroke-width="9" fill="none"/>
<path d="M1840 840L1770 920L1840 990" stroke="#fbd872" stroke-width="10" fill="none"/>
<circle cx="925" cy="520" r="360" fill="#c4dcec"/>
<circle cx="925" cy="520" r="325" fill="#a6deda"/>
<circle cx="925" cy="520" r="300" fill="#d8ecf8"/>
<circle cx="925" cy="520" r="262" fill="#6ccaf8"/>
<circle cx="925" cy="520" r="170" fill="#74c4f4"/>
<g font-size="158" font-weight="900" fill="#c84848" stroke="#fff" stroke-width="20" paint-order="stroke" stroke-linejoin="round" text-anchor="middle">
<text x="920" y="468" textLength="1010" lengthAdjust="spacingAndGlyphs">电商要不要</text>
<text x="905" y="695" textLength="1420" lengthAdjust="spacingAndGlyphs">办理营业执照？</text>
</g>
</g></svg><div class="cap">电商要不要办理营业执照</div></div>
<div class="card" style="left:297px;top:270px"><svg viewBox="0 0 266 150" preserveAspectRatio="none"><defs><radialGradient id="g7" cx=".5" cy=".5" r=".7"><stop offset="0" stop-color="#ecefed"/><stop offset="1" stop-color="#dde3ee"/></radialGradient></defs>
<g transform="scale(0.1452)">
<rect width="1840" height="1040" fill="url(#g7)"/>
<g fill="#eef1f6" opacity=".9"><ellipse cx="180" cy="420" rx="200" ry="80"/><ellipse cx="300" cy="540" rx="220" ry="70"/><ellipse cx="500" cy="650" rx="180" ry="60"/><ellipse cx="1720" cy="380" rx="160" ry="90"/><ellipse cx="200" cy="60" rx="220" ry="60"/><ellipse cx="1300" cy="620" rx="140" ry="60"/></g>
<rect x="0" y="880" width="1840" height="160" fill="#e6eaf0" opacity=".8"/>
<circle cx="900" cy="520" r="368" fill="#fff"/>
<path d="M250 880L260 820C500 800 640 760 740 660C800 590 1000 590 1060 660C1160 760 1300 800 1530 820L1540 880H1030C1030 800 990 680 885 680C780 680 740 800 740 880Z" fill="#252c5a"/>
<path d="M300 800C520 780 660 740 750 640C810 575 990 575 1050 640C1140 740 1280 780 1500 800" stroke="#252c5a" stroke-width="22" fill="none" stroke-dasharray="22 18"/>
<path d="M760 380C800 360 830 390 820 430L850 470L840 560L790 560L800 620L720 660L670 620L740 560L760 470L730 440Z" fill="#16171f"/>
<path d="M800 450L860 460L850 560L800 540Z" fill="#8a8e98"/>
<path d="M660 550L760 530L740 570Z" fill="#16171f"/>
<path d="M980 390C1010 370 1030 400 1020 430L1050 450L1050 520L1030 560L1050 640L960 620L970 520L920 510L910 460L980 450Z" fill="#16171f"/>
<path d="M915 460L975 455L970 520L925 505Z" fill="#9a9ea8"/>
<g fill="#0c0c10"><path d="M70 810L110 790L130 770L140 800L160 830L120 845L100 865L80 860Z"/><path d="M170 760L215 745L235 720L245 755L255 780L220 790L200 810L180 805Z"/><path d="M175 860L220 845L245 815L250 850L260 880L225 888L200 905L185 900Z"/><path d="M1675 650L1700 660L1720 635L1740 655L1730 680L1700 690Z"/><path d="M1555 740L1590 735L1610 710L1635 730L1630 765L1590 770Z"/><path d="M1690 810L1725 800L1745 770L1780 800L1770 840L1725 845Z"/><path d="M1590 850L1625 845L1645 815L1680 840L1665 880L1625 885Z"/><path d="M1485 845L1520 835L1540 810L1570 835L1560 880L1520 880Z"/></g>
<g font-family="'Noto Serif CJK SC','Liberation Serif',serif" font-size="62" font-weight="700" fill="#3c4a80">
<text x="1480" y="180">关</text><text x="1480" y="258">于</text><text x="1480" y="336">七</text><text x="1480" y="414">夕</text><text x="1480" y="492">的</text><text x="1480" y="570">那</text><text x="1480" y="645">些</text>
<text x="1365" y="290" font-size="56">冷</text><text x="1365" y="365" font-size="56">知</text><text x="1365" y="438" font-size="56">识</text></g>
<rect x="1368" y="452" width="54" height="58" fill="#d8232a"/>
</g></svg><div class="cap">七夕冷知识</div></div>
<div class="card" style="left:574px;top:270px"><svg viewBox="0 0 266 150" preserveAspectRatio="none"><g transform="scale(0.1452)">
<rect width="1840" height="1040" fill="#a9d0f4"/>
<path d="M480 0H1840V300C1700 320 1500 300 1300 340C1100 380 1000 520 900 640C820 700 740 620 700 480C660 340 560 160 480 0Z" fill="#bfdcf8"/>
<circle cx="1720" cy="130" r="150" fill="#e2f6ec"/>
<path d="M0 0H470L440 60L380 30L400 230L340 160L330 300L270 250L260 560L225 520L210 300L150 330L100 470L60 380L0 420Z" fill="#4caf50" opacity=".7"/>
<path d="M0 330C30 270 110 240 190 235L195 255C120 270 70 300 55 380C40 520 50 700 90 840L0 860Z" fill="#2a1a1a"/>
<g fill="none" stroke-width="26"><path d="M360 1040C360 930 540 930 540 1040M560 1040C560 930 740 930 740 1040M760 1040C760 930 940 930 940 1040M960 1040C960 930 1140 930 1140 1040M1160 1040C1160 930 1340 930 1340 1040M1360 1040C1360 930 1540 930 1540 1040M1560 1040C1560 930 1740 930 1740 1040M1760 1040C1760 930 1940 930 1940 1040M0 1040C0 960 140 960 160 1040" stroke="#2a62c8"/></g>
<path d="M200 900C260 830 380 830 440 900C520 830 600 830 680 900C760 830 860 830 920 900C1000 830 1100 830 1180 900C1260 830 1340 830 1400 900C1480 850 1580 850 1660 900C1720 860 1800 860 1840 890V1040H200Z" fill="#3a78d8"/>
<g fill="none" stroke="#8ec4f4" stroke-width="22"><path d="M260 1040C260 900 480 900 480 1040M520 1040C520 900 740 900 740 1040M780 1040C780 900 1000 900 1000 1040M1040 1040C1040 900 1260 900 1260 1040M1300 1040C1300 900 1520 900 1520 1040M1560 1040C1560 900 1780 900 1780 1040"/><path d="M320 1040C320 950 420 950 420 1040M580 1040C580 950 680 950 680 1040M840 1040C840 950 940 950 940 1040M1100 1040C1100 950 1200 950 1200 1040M1360 1040C1360 950 1460 950 1460 1040M1620 1040C1620 950 1720 950 1720 1040" stroke="#5aa0ec"/></g>
<path d="M1000 850C1000 780 1040 760 1080 780C1100 860 1080 920 1100 940H1700C1740 900 1680 760 1700 680L1730 690C1720 780 1800 880 1790 960C1700 1000 1200 1000 1050 980C1000 950 1000 900 1000 850Z" fill="#c8453c"/>
<path d="M950 730C1000 700 1060 690 1100 700L1120 760L1000 800L960 780Z" fill="#b83028"/>
<path d="M1060 620C1100 580 1180 600 1210 640L1160 660L1200 700L1140 720L1180 770L1100 780C1080 720 1060 680 1060 620Z" fill="#f4c820"/>
<path d="M1040 560L1060 640L1100 640L1120 540L1085 580Z" fill="#d84830"/>
<path d="M1680 680C1640 620 1700 560 1740 530C1760 580 1800 600 1760 660C1740 680 1700 690 1680 680Z" fill="#f4c820"/>
<path d="M1380 900C1380 860 1420 800 1450 790C1490 820 1520 870 1515 905C1480 925 1420 925 1380 900Z" fill="#1f7a3a"/>
<path d="M1520 905C1520 860 1560 800 1590 795C1630 830 1660 870 1655 905C1620 925 1560 925 1520 905Z" fill="#1f7a3a"/>
<path d="M1425 810L1450 785L1480 812L1452 830ZM1565 815L1590 790L1618 818L1590 835Z" fill="#f4e070"/>
<path d="M1225 620C1230 600 1300 600 1310 620L1330 720L1300 730L1290 900H1240L1235 730L1210 720Z" fill="#7cc4d8"/>
<path d="M1255 630H1285V900H1255Z" fill="#f4f8fa"/>
<circle cx="1268" cy="555" r="42" fill="#f8d0a8"/>
<path d="M1228 545C1228 500 1308 500 1308 545C1290 520 1250 520 1228 545Z" fill="#222"/><circle cx="1268" cy="497" r="16" fill="#222"/>
<path d="M1235 905H1300V920H1235Z" fill="#f4f8fa"/>
<ellipse cx="1268" cy="925" rx="40" ry="9" fill="#7a2a20"/>
<path d="M10 980C60 900 200 900 240 960C300 880 400 900 400 980C360 1020 200 1030 10 980Z" fill="#3a9a3a"/>
<path d="M280 800V900M120 920V1040" stroke="#3a9a3a" stroke-width="12"/><circle cx="282" cy="795" r="22" fill="#4aaa4a"/>
<path d="M25 880C30 830 80 800 120 830C130 780 180 780 200 830C240 820 250 870 220 900C180 940 80 940 25 880Z" fill="#fbc8cc"/>
<ellipse cx="130" cy="860" rx="30" ry="16" fill="#f8e070"/>
<path d="M1370 355C1420 350 1450 320 1490 280C1530 320 1560 350 1610 355L1600 370H1380Z" fill="#b86a1c"/>
<path d="M1440 370H1465V410H1440ZM1515 370H1540V410H1515ZM1470 370H1480V410H1470Z" fill="#8a4a14"/>
<rect x="403" y="455" width="430" height="78" rx="16" fill="#dff4e8" stroke="#1a7a88" stroke-width="8"/>
<text x="618" y="518" font-size="60" font-weight="900" fill="#1a6a70" text-anchor="middle" letter-spacing="4" font-family="'Noto Serif CJK SC','Liberation Serif',serif">由来及习俗</text>
<text x="395" y="385" font-size="186" font-weight="900" fill="#1a7a88" textLength="920" lengthAdjust="spacingAndGlyphs" font-family="'Noto Serif CJK SC','Liberation Serif',serif">端午节介绍</text>
</g></svg><div class="cap">端午节介绍</div></div>
<div class="card" style="left:851px;top:270px"><svg viewBox="0 0 266 150" preserveAspectRatio="none"><g transform="scale(0.1452)">
<rect width="1840" height="1040" fill="#84d6f0"/>
<g fill="#fff"><path d="M55 200C60 160 110 170 120 150C150 110 200 140 205 160C250 150 270 190 260 200Z"/><path d="M580 50C590 10 640 20 650 15C680 0 720 20 725 45C720 55 600 58 580 50Z"/><path d="M1365 160C1370 110 1420 120 1430 100C1470 70 1510 100 1520 120C1560 120 1570 150 1550 165Z"/><path d="M1730 310C1730 270 1780 275 1790 250C1810 230 1840 240 1840 250V315Z"/><path d="M10 390V320C40 310 60 330 65 350C100 350 110 380 95 385Z"/></g>
<rect x="100" y="440" width="1680" height="270" fill="#f8bc5a"/>
<rect x="100" y="440" width="1680" height="28" fill="#d0646a"/>
<path d="M170 515H630V555H170ZM170 595H630V635H170ZM1275 515H1780V555H1275ZM1275 595H1780V635H1275Z" fill="#4a7a9a"/>
<rect x="655" y="400" width="550" height="300" fill="#f4ae48"/>
<rect x="638" y="384" width="580" height="26" fill="#2f5a56"/>
<rect x="795" y="335" width="220" height="365" fill="#f8bc5a"/>
<rect x="780" y="320" width="250" height="26" fill="#2f5a56"/>
<circle cx="915" cy="415" r="36" fill="#f4f8f8" stroke="#2f5a56" stroke-width="10"/>
<path d="M905 430L925 400" stroke="#222" stroke-width="8"/>
<g fill="#4a7a9a"><rect x="680" y="470" width="45" height="50"/><rect x="742" y="470" width="45" height="50"/><rect x="680" y="552" width="45" height="50"/><rect x="742" y="552" width="45" height="50"/><rect x="1045" y="470" width="55" height="50"/><rect x="1122" y="470" width="55" height="50"/><rect x="1045" y="552" width="55" height="50"/><rect x="1122" y="552" width="55" height="50"/></g>
<rect x="860" y="485" width="105" height="130" fill="#e8786a"/>
<rect x="850" y="610" width="130" height="80" fill="#f8e4b8"/><rect x="842" y="690" width="146" height="16" fill="#2f5a56"/>
<path d="M908 330V170" stroke="#c8c8c8" stroke-width="7"/>
<path d="M912 180C950 170 980 185 1015 178V240C980 248 950 235 912 242Z" fill="#e83020"/>
<path d="M0 460C60 440 80 480 120 490C180 500 180 580 160 610H0ZM1450 600C1480 560 1540 580 1560 560C1620 540 1700 580 1760 590C1800 540 1840 540 1840 560V860H1500Z" fill="#2f8a5a"/>
<path d="M1590 540V780M1705 510V830M1500 640H1840M1540 690H1840" stroke="#2a4a4a" stroke-width="12"/>
<circle cx="1582" cy="533" r="20" fill="#fff8e0"/><circle cx="1700" cy="505" r="22" fill="#fff8e0"/>
<rect x="510" y="690" width="820" height="310" fill="#8cc662"/>
<path d="M850 700H990C1040 820 1140 920 1270 1000H515C660 920 780 820 850 700Z" fill="#f8f0d0"/>
<rect x="0" y="990" width="1840" height="50" fill="#8a8a8a"/>
<rect x="0" y="605" width="360" height="390" fill="#d06a72"/>
<path d="M0 670H70L80 895H0ZM135 670H240V895H135Z" fill="#f8b060"/>
<path d="M1450 605C1520 700 1600 820 1840 850V995H1450Z" fill="#d06a72"/>
<rect x="350" y="555" width="165" height="440" fill="#d85a68"/>
<path d="M378 600H488L480 945H400Z" fill="#f8f4e4"/>
<rect x="1300" y="545" width="150" height="450" fill="#d85a68"/>
<path d="M1322 600H1420L1415 945H1340Z" fill="#f8f4e4"/>
<path d="M400 495H465L455 550H410ZM1340 485H1405L1395 540H1350Z" fill="#4a4a6a"/>
<circle cx="432" cy="430" r="72" fill="#fcfcfc"/><circle cx="1372" cy="418" r="74" fill="#fcfcfc"/>
<ellipse cx="778" cy="690" rx="50" ry="56" fill="#3a2e4e"/>
<path d="M750 760H810L818 840H800L790 930H765L760 840H742Z" fill="#6a5a8a"/>
<ellipse cx="965" cy="648" rx="36" ry="40" fill="#3a2e4e"/>
<path d="M942 700H988L992 760H978L968 815H955L952 760H938Z" fill="#6a5a8a"/>
</g></svg><div class="cap">开学防疫小口诀</div></div>
<div class="card" style="left:1128px;top:270px"><svg viewBox="0 0 266 150" preserveAspectRatio="none"><g transform="scale(0.1452)">
<rect width="1840" height="1040" fill="#fdecc6"/>
<rect x="0" y="800" width="1840" height="240" fill="#fdfbf4"/>
<g fill="#cf9232"><path d="M0 800H110L0 900ZM230 800H400L160 1040H0V1000ZM520 800H680L500 1040H320ZM800 800H880L780 1040H620ZM1000 800H1100L1160 1040H1000ZM1230 800H1400L1500 1040H1330ZM1520 800H1700L1840 960V1040H1700ZM1800 800H1840V850Z"/></g>
<rect x="0" y="220" width="300" height="345" fill="#c8843c"/>
<rect x="0" y="240" width="128" height="305" fill="#d4ecfa"/><rect x="140" y="240" width="140" height="305" fill="#c4e4f8"/>
<rect x="0" y="545" width="300" height="22" fill="#b87a30"/>
<rect x="1555" y="215" width="285" height="350" fill="#c8843c"/>
<rect x="1575" y="235" width="130" height="310" fill="#d4ecfa"/><rect x="1718" y="235" width="122" height="310" fill="#c4e4f8"/>
<rect x="388" y="160" width="1085" height="445" fill="#d09a48"/>
<rect x="410" y="182" width="1040" height="400" rx="40" fill="#4e9a9a"/>
<path d="M880 420C900 360 1000 350 1040 420C1070 480 1060 540 1090 600C1080 680 1020 700 980 690L990 600L900 600L905 690C860 700 850 640 880 600C850 560 860 480 880 420Z" fill="#8a3a28"/>
<ellipse cx="945" cy="490" rx="60" ry="72" fill="#fad8b8"/>
<path d="M882 470C890 400 1000 390 1020 460C980 450 940 440 882 470Z" fill="#8a3a28"/>
<circle cx="915" cy="490" r="9" fill="#2a1a1a"/><circle cx="968" cy="490" r="9" fill="#2a1a1a"/>
<path d="M925 560H960V600H925Z" fill="#f4c8a4"/>
<path d="M900 620C910 590 980 590 985 620L975 700L960 830H930L905 700Z" fill="#d84a78"/>
<rect x="905" y="692" width="72" height="12" fill="#f0a030"/>
<path d="M885 610L900 600L905 700L890 720ZM985 600L1000 615L1000 720L985 700Z" fill="#fad8b8"/>
<path d="M935 830H955L945 980H932Z" fill="#fad8b8"/>
<path d="M900 1000L935 975L950 990L935 1002Z" fill="#c82a2a"/>
<text x="955" y="118" font-size="96" font-weight="900" fill="#f29a3c" text-anchor="middle" textLength="990" lengthAdjust="spacingAndGlyphs">如何保障微课质量？</text>
<text x="935" y="345" font-size="100" font-weight="900" fill="#222" text-anchor="middle" textLength="940" lengthAdjust="spacingAndGlyphs" font-family="'Noto Serif CJK SC',serif">如何规划微课体系？</text>
<text x="65" y="535" font-size="102" font-weight="500" fill="#1f7a3a" textLength="710" lengthAdjust="spacingAndGlyphs">微课如何交付？</text>
<text x="1180" y="492" font-size="76" font-weight="700" fill="#e84a3a" textLength="570" lengthAdjust="spacingAndGlyphs">微课如何开发？</text>
<text x="135" y="715" font-size="78" font-weight="400" fill="#f0907a" textLength="540" lengthAdjust="spacingAndGlyphs">谁来开发微课?</text>
<text x="945" y="905" font-size="112" font-weight="900" fill="#2a2a2a" text-anchor="middle" textLength="1290" lengthAdjust="spacingAndGlyphs" font-family="'Noto Serif CJK SC',serif">什么样的微课内容受欢迎?</text>
</g></svg><div class="cap">5D微课介绍</div></div>
<div class="card" style="left:1405px;top:270px"><svg viewBox="0 0 266 150" preserveAspectRatio="none"><g transform="scale(0.1452)">
<rect width="1840" height="1040" fill="#bde3fa"/>
<circle cx="385" cy="425" r="160" fill="#fff" stroke="#f26a2c" stroke-width="36"/>
<text x="382" y="478" font-size="130" font-weight="900" fill="#1f62b8" text-anchor="middle">涉军</text>
<path d="M290 540L490 300" stroke="#f26a2c" stroke-width="34"/>
<circle cx="1500" cy="425" r="160" fill="#fff" stroke="#f26a2c" stroke-width="36"/>
<text x="1498" y="478" font-size="130" font-weight="900" fill="#1f62b8" text-anchor="middle">涉密</text>
<path d="M1405 540L1605 300" stroke="#f26a2c" stroke-width="34"/>
<ellipse cx="940" cy="610" rx="115" ry="150" fill="#fff"/>
<rect x="928" y="505" width="18" height="55" rx="9" fill="#4a6ad8"/>
<path d="M790 660C810 640 830 650 850 700L880 740L875 560C880 520 915 520 920 560L935 680L975 560C985 520 1030 530 1025 570L1005 690L1035 610C1050 570 1090 585 1080 620L1050 720L1075 670C1095 640 1120 655 1110 690L1060 860L1050 970H870L865 880C830 800 800 740 790 660Z" fill="#fbcfa8"/>
<rect x="862" y="962" width="190" height="78" fill="#f0703a"/>
<text x="905" y="1018" font-size="42" font-weight="700" fill="#222" text-anchor="middle">不要发布涉军涉密信息</text>
</g></svg><div class="cap">维护国家安全，人人有责</div></div>
<div class="card" style="left:20px;top:478px"><svg viewBox="0 0 266 150" preserveAspectRatio="none"><g transform="scale(0.1452)">
<rect width="1840" height="1040" fill="#e2f0f6"/>
<rect x="0" y="0" width="1840" height="52" fill="#e8eaec"/>
<rect x="0" y="52" width="1840" height="16" fill="#a8aaac"/>
<rect x="50" y="20" width="14" height="40" fill="#8a8c8e"/><rect x="1780" y="20" width="14" height="40" fill="#8a8c8e"/>
<rect x="55" y="68" width="1730" height="972" fill="#8cc2e0"/>
<rect x="55" y="105" width="1730" height="72" fill="#e4f2f8"/>
<circle cx="165" cy="140" r="50" fill="#2a6ae8"/>
<text x="165" y="160" font-size="48" font-weight="700" fill="#fff" text-anchor="middle">AM</text>
<text x="232" y="150" font-size="36" fill="#6a8aa0">勾股定理的妙用</text>
<path d="M940 160L960 130L990 150L1000 125L1030 150L1050 140L1060 175L1090 185L1080 260L990 200Z" fill="#f29a20"/>
<path d="M690 400C690 260 800 170 930 170C1020 170 1080 200 1100 230C1140 150 1180 250 1160 380C1140 500 1120 600 1180 670C1100 740 1040 700 1010 600L1030 440C980 420 880 380 800 320C760 370 740 420 720 470Z" fill="#2a2a44"/>
<path d="M720 470C740 420 760 370 800 320C880 380 980 420 1040 440L1030 530C1000 600 940 640 880 640C800 640 720 570 720 470Z" fill="#fbe0cc"/>
<ellipse cx="1060" cy="480" rx="28" ry="42" fill="#fbe0cc"/><ellipse cx="712" cy="480" rx="18" ry="34" fill="#fbe0cc"/>
<ellipse cx="778" cy="468" rx="32" ry="36" fill="#1a1a2a"/><ellipse cx="925" cy="470" rx="36" ry="38" fill="#1a1a2a"/>
<ellipse cx="860" cy="575" rx="12" ry="16" fill="#c84a4a"/>
<path d="M840 630H930V700H840Z" fill="#f8d4bc"/>
<path d="M770 690C780 660 1000 660 1010 690L1030 1040H740Z" fill="#fff"/>
<path d="M800 680L870 760L950 680L990 700L960 1040H790L780 800Z" fill="#2e86b8"/>
<path d="M810 690L850 650L885 700L930 650L950 700L870 750Z" fill="#fff"/>
<path d="M790 940H960L980 1040H770Z" fill="#3a4a6a"/>
<g font-size="100" font-weight="900" fill="#fff"><text x="0" y="0" transform="translate(430 420) rotate(-38)">简洁</text><text x="0" y="0" transform="translate(1230 330) rotate(32)">优美</text></g>
<g font-size="92" font-weight="900" fill="#f2a030"><text x="485" y="615">缓</text><text x="0" y="0" transform="translate(420 800) rotate(-20)">解</text><text x="1245" y="615">有</text><text x="1320" y="780">用</text></g>
<text x="905" y="1032" font-size="42" font-weight="700" fill="#222" text-anchor="middle">同时勾股的短腿与格也不差</text>
</g></svg><div class="cap">勾股定理</div></div>
<div class="card" style="left:297px;top:478px"><svg viewBox="0 0 266 150" preserveAspectRatio="none"><defs><linearGradient id="g13" x1="0" y1="0" x2="0" y2="1"><stop offset="0" stop-color="#a8c8e0"/><stop offset=".5" stop-color="#dfe6e4"/></linearGradient></defs>
<g transform="scale(0.1452)">
<rect width="1840" height="1040" fill="#4896d0"/>
<path d="M430 10V70M1412 10V70" stroke="#333" stroke-width="9"/><path d="M400 95L415 65H448L462 95ZM1382 95L1397 65H1430L1444 95Z" fill="#2a2a2a"/>
<rect x="318" y="95" width="1207" height="690" fill="url(#g13)"/>
<path d="M318 330L440 215L560 330L700 205L900 380L1010 290L1140 390L1330 190L1525 380V700H318Z" fill="#a4b83c"/>
<path d="M318 420C500 330 700 380 900 440C1100 380 1300 400 1525 470V700H318Z" fill="#c4cc5a"/>
<rect x="318" y="640" width="1207" height="60" fill="#a4b83c"/>
<rect x="318" y="690" width="1207" height="95" fill="#f2d49a"/>
<g fill="#7a9c3c"><ellipse cx="590" cy="385" rx="110" ry="110"/><circle cx="415" cy="570" r="60"/><ellipse cx="1220" cy="450" rx="85" ry="85"/><circle cx="1385" cy="585" r="52"/></g>
<path d="M590 480V560M412 620V650M1215 520V650M1385 630V650" stroke="#5a3a1a" stroke-width="16"/>
<g fill="#fff"><circle cx="560" cy="330" r="9"/><circle cx="640" cy="340" r="9"/><circle cx="600" cy="380" r="9"/><circle cx="545" cy="420" r="9"/><circle cx="640" cy="430" r="9"/><circle cx="1200" cy="400" r="9"/><circle cx="1250" cy="440" r="9"/><circle cx="1190" cy="480" r="9"/><circle cx="400" cy="550" r="7"/><circle cx="440" cy="580" r="7"/><circle cx="1370" cy="570" r="7"/><circle cx="1405" cy="600" r="7"/></g>
<rect x="725" y="515" width="120" height="75" fill="#a86a2a"/>
<path d="M510 490C520 440 600 430 640 470C660 500 690 480 690 440C700 420 730 430 725 470C720 520 740 540 780 550C810 570 800 620 770 640L740 600C700 590 640 620 600 660C620 690 640 720 620 750L600 700L570 690L530 740C520 700 560 680 560 640C540 600 560 560 540 520Z" fill="#0a0a0a"/>
<path d="M845 440C900 440 930 420 945 415C965 425 1000 435 1030 430C1040 560 1010 700 950 745C890 700 840 580 845 440Z" fill="#5a6070"/>
<path d="M880 500H965C965 580 945 630 922 640C900 630 880 580 880 500Z" fill="none" stroke="#c8a840" stroke-width="12"/>
<path d="M922 440V740" stroke="#3a4050" stroke-width="6"/>
<circle cx="1125" cy="575" r="45" fill="#b8502a"/><circle cx="1118" cy="590" r="30" fill="#fbdcc0"/>
<path d="M1095 630H1145L1150 705H1090Z" fill="#3a4a8a"/><rect x="1130" y="630" width="20" height="50" fill="#e8783a"/>
<path d="M1100 705H1113V745H1100ZM1125 705H1138V745H1125Z" fill="#fbdcc0"/>
<text x="578" y="205" font-size="54" font-weight="900" fill="#161616">如何保护我们的孩子?</text>
<text x="780" y="285" font-size="52" font-weight="900" fill="#161616">——儿童防性侵教育</text>
<path d="M1480 430C1470 300 1560 225 1650 230C1760 235 1810 330 1800 420C1830 470 1800 560 1740 570L1700 620H1560C1500 580 1485 500 1480 430Z" fill="#8a4828"/>
<path d="M1510 420C1540 350 1620 320 1680 340C1730 370 1750 430 1740 500C1720 570 1670 610 1620 610C1560 610 1510 540 1510 420Z" fill="#fbdfc8"/>
<ellipse cx="1545" cy="450" rx="24" ry="28" fill="#2a1a1a"/><ellipse cx="1665" cy="455" rx="26" ry="28" fill="#2a1a1a"/>
<path d="M1585 535Q1610 520 1630 538" stroke="#a04a3a" stroke-width="7" fill="none"/>
<path d="M1585 600H1650V650H1585Z" fill="#f4ccb0"/>
<path d="M1520 640C1560 610 1700 610 1740 650L1770 845H1475Z" fill="#fdfdfd"/>
<path d="M1580 615L1610 680L1650 615" fill="#f4ccb0"/>
<path d="M1560 640L1590 760M1650 650L1595 760" stroke="#3a6aa8" stroke-width="6"/><rect x="1560" y="760" width="65" height="42" fill="#f4f8fc" stroke="#8a9ab0" stroke-width="4"/>
<rect x="0" y="845" width="1840" height="105" fill="#1f7ee8"/>
<text x="20" y="922" font-size="66" font-weight="400" fill="#fff" textLength="258" lengthAdjust="spacingAndGlyphs">热点新闻</text>
<text x="465" y="925" font-size="68" font-weight="900" fill="#fff" textLength="1045" lengthAdjust="spacing">未成年遭性侵事件引发全社会关注</text>
<rect x="0" y="950" width="1840" height="90" fill="#000"/>
<rect x="0" y="950" width="287" height="90" fill="#e82424"/>
<text x="18" y="1028" font-size="72" fill="#fff" font-family="'Liberation Mono',monospace" textLength="230" lengthAdjust="spacingAndGlyphs">19: 00</text>
</g></svg><div class="cap">儿童防性侵教育</div></div>
<div class="card" style="left:574px;top:478px"><svg viewBox="0 0 266 150" preserveAspectRatio="none"><g transform="scale(0.1452)">
<rect width="1840" height="1040" fill="#bcdff6"/>
<g fill="#fff"><path d="M1215 235C1225 200 1290 205 1305 185C1340 135 1420 140 1440 185C1490 170 1530 200 1530 235Z"/><path d="M280 882C285 845 330 835 350 820C390 780 470 790 490 830C540 820 590 850 590 882Z"/><rect x="1548" y="206" width="170" height="9"/><rect x="1130" y="247" width="70" height="8"/><rect x="1610" y="228" width="60" height="7"/><rect x="90" y="853" width="170" height="10"/><rect x="610" y="896" width="80" height="10"/></g>
<circle cx="685" cy="342" r="96" fill="#fff" stroke="#e87020" stroke-width="30"/>
<path d="M630 380L680 335H735" stroke="#e87020" stroke-width="24" fill="none" stroke-linecap="round" stroke-linejoin="round"/>
<text x="835" y="402" font-size="140" font-weight="900" fill="#1a72c8" textLength="420" lengthAdjust="spacingAndGlyphs">上班族</text>
<text x="922" y="700" font-size="196" font-weight="900" fill="#1a72c8" text-anchor="middle" textLength="950" lengthAdjust="spacingAndGlyphs">防疫全攻略</text>
</g></svg><div class="cap">上班族防疫全攻略</div></div>
<div class="card" style="left:851px;top:478px"><svg viewBox="0 0 266 150" preserveAspectRatio="none"><g transform="scale(0.1452)">
<rect width="1840" height="1040" fill="#fdb928"/>
<rect x="0" y="890" width="1840" height="150" fill="#7a5240"/>
<path d="M268 0V180" stroke="#4aa8b4" stroke-width="14"/>
<path d="M160 285C160 140 375 140 375 285Z" fill="#3e9aa8"/>
<rect x="525" y="240" width="950" height="312" fill="#f04a24" stroke="#c83a1a" stroke-width="6"/>
<path d="M480 165L1110 160V300L490 320Z" fill="#38b8d8"/>
<rect x="465" y="150" width="620" height="148" fill="#fff" stroke="#1a1a1a" stroke-width="9"/>
<path d="M1085 150L1110 165V310L1085 298Z" fill="#fdd040" stroke="#1a1a1a" stroke-width="5"/>
<text x="770" y="272" font-size="118" font-weight="900" fill="#1a1a1a" text-anchor="middle" textLength="470" lengthAdjust="spacingAndGlyphs">复工返岗</text>
<text x="885" y="475" font-size="106" font-weight="900" fill="#fff" stroke="#1a1a1a" stroke-width="14" paint-order="stroke" stroke-linejoin="round" text-anchor="middle" textLength="640" lengthAdjust="spacingAndGlyphs">你准备好了吗</text>
<text x="1285" y="462" font-size="420" font-weight="900" fill="#4ec4dc" stroke="#1a1a1a" stroke-width="9" text-anchor="middle" font-family="'Liberation Sans',sans-serif">?</text>
<path d="M880 525H960M920 490V565" stroke="#ffe0c8" stroke-width="5"/>
<path d="M135 700C130 670 170 670 170 700L180 730C185 680 225 680 220 730L210 800H150Z" fill="#3a9a8a"/>
<path d="M105 795H235L215 905H125Z" fill="#7a4a3a"/>
<path d="M325 705H345V835H610V705H628V900H325Z" fill="#6ab4c4"/>
<rect x="325" y="835" width="303" height="65" fill="#7ac4d0"/>
<g><rect x="365" y="640" width="50" height="195" fill="#a8c4dc"/><rect x="430" y="635" width="45" height="200" fill="#b8d0e4"/><rect x="485" y="710" width="22" height="125" fill="#f8c8c8"/><rect x="510" y="700" width="28" height="135" fill="#f8f0d0"/><rect x="548" y="645" width="30" height="190" fill="#f8f8f8"/><rect x="578" y="590" width="32" height="240" fill="#dce8f4"/></g>
<rect x="745" y="765" width="215" height="140" rx="10" fill="#1e4a44"/>
<path d="M810 765V745H895V765" stroke="#1e3a34" stroke-width="14" fill="none"/>
<rect x="745" y="765" width="215" height="60" rx="10" fill="#163a34"/><rect x="838" y="820" width="30" height="22" fill="#e8e8e8"/>
<path d="M1440 560C1500 540 1580 560 1600 600L1640 860H1420Z" fill="#2c3e78"/>
<path d="M1440 570L1370 660L1290 610L1280 630L1340 700L1390 710L1460 650Z" fill="#2c3e78"/>
<path d="M1240 595L1290 600L1290 625L1250 620Z" fill="#f8d0a8"/>
<path d="M1480 560H1545L1530 720H1470Z" fill="#fdf0d8"/>
<path d="M1490 570L1470 700M1535 570L1485 700" stroke="#e89a9a" stroke-width="5"/><rect x="1455" y="695" width="40" height="28" fill="#f4a8b4"/>
<path d="M1430 440C1420 340 1480 300 1540 305C1590 320 1610 380 1600 450C1590 530 1550 570 1510 570C1470 560 1440 520 1430 440Z" fill="#fbd6b0"/>
<path d="M1420 420C1410 320 1470 280 1520 270C1580 280 1630 340 1605 440L1590 400C1560 380 1510 360 1460 370Z" fill="#6a3a1a"/>
<ellipse cx="1455" cy="448" rx="14" ry="18" fill="#1a1a1a"/><ellipse cx="1528" cy="450" rx="14" ry="18" fill="#1a1a1a"/>
<ellipse cx="1482" cy="518" rx="8" ry="10" fill="#a84a3a"/>
<path d="M1350 730H1600L1585 890H1340Z" fill="#cdd0d4"/><circle cx="1470" cy="790" r="18" fill="#f4f4f4"/>
<rect x="1335" y="885" width="275" height="14" fill="#e4e6e8"/>
<rect x="1650" y="820" width="80" height="100" rx="12" fill="#5ab0b8"/><rect x="1725" y="840" width="22" height="45" rx="8" fill="none" stroke="#5ab0b8" stroke-width="8"/>
<text x="920" y="980" font-size="42" font-weight="700" fill="#f4f0ec" text-anchor="middle" textLength="890" lengthAdjust="spacing">随着节后复工潮的开始 大部分人也将投入到工作中</text>
</g></svg><div class="cap">如何节后复工</div></div>
<div class="card" style="left:1128px;top:478px"><svg viewBox="0 0 266 150" preserveAspectRatio="none"><g transform="scale(0.1452)">
<rect width="1840" height="1040" fill="#f0f0f0"/>
<rect x="0" y="328" width="1840" height="388" fill="#675af6"/>
<text x="920" y="545" font-size="60" font-weight="900" fill="#fff" text-anchor="middle" textLength="1195" lengthAdjust="spacing">这份儿童防疫指南，家长们请收好！</text>
</g></svg><div class="cap">儿童防疫10问</div></div>
<div class="card" style="left:1405px;top:478px"><svg viewBox="0 0 266 150" preserveAspectRatio="none"><g transform="scale(0.1452)">
<rect width="1840" height="1040" fill="#24a0c4"/>
<path d="M225 0L525 160M0 410L180 330M870 0V780M870 780L1840 295M525 955L690 1040" stroke="#d8f4fc" stroke-width="5" stroke-dasharray="30 6" fill="none"/>
<path d="M525 165L868 335V780L525 955L182 780V335Z" fill="none" stroke="#e87878" stroke-width="16"/>
<path d="M525 205L832 360V760L525 915L215 760V360Z" fill="#fdc03c"/>
<g stroke="#8ec494" stroke-width="16" stroke-linecap="round"><path d="M525 400L500 330M600 420L640 350M660 470L730 430M690 550L750 545M670 640L720 670M610 700L640 740M400 440L350 400M365 530L310 520M360 620L305 650M420 700L400 745M460 410L440 355"/></g>
<g fill="#8ec494"><circle cx="498" cy="328" r="16"/><circle cx="642" cy="348" r="16"/><circle cx="732" cy="428" r="16"/><circle cx="752" cy="545" r="16"/><circle cx="722" cy="672" r="16"/><circle cx="348" cy="398" r="16"/><circle cx="308" cy="520" r="16"/><circle cx="303" cy="652" r="16"/></g>
<circle cx="525" cy="550" r="172" fill="#8ec892"/>
<circle cx="505" cy="520" r="120" fill="#a4d4a4" opacity=".6"/>
<circle cx="458" cy="520" r="38" fill="#fff"/><circle cx="590" cy="520" r="38" fill="#fff"/>
<circle cx="462" cy="538" r="19" fill="#6a2a2a"/><circle cx="585" cy="538" r="19" fill="#6a2a2a"/>
<ellipse cx="523" cy="582" rx="12" ry="16" fill="#fff"/>
<path d="M400 600Q430 630 470 605M560 605Q600 630 635 600" stroke="#4a2a2a" stroke-width="7" fill="none"/>
<path d="M468 712L458 800H425M570 712L585 800H618" stroke="#3a1a1a" stroke-width="10" fill="none"/>
<text x="0" y="0" font-size="96" font-weight="900" fill="#fff" stroke="#1a6a88" stroke-width="3" transform="translate(955 705) rotate(-26.5)" textLength="990" lengthAdjust="spacingAndGlyphs">如何预防新型冠状病毒感染</text>
<text x="1350" y="1005" font-size="50" font-weight="500" fill="#d8f0f8" textLength="430" lengthAdjust="spacingAndGlyphs">制作：万彩动画大师</text>
</g></svg><div class="cap">如何预防新型冠状病毒感染</div></div>
<div class="card" style="left:20px;top:686px"><svg viewBox="0 0 266 150" preserveAspectRatio="none"><g transform="scale(0.2781)">
<rect width="960" height="545" fill="#000"/>
<rect x="330" y="0" width="302" height="545" fill="#fdfcf4"/>
<text x="480" y="28" font-size="22" font-weight="900" fill="#111" text-anchor="middle">90层大楼</text>
<path d="M455 70C460 45 500 45 510 70Z" fill="#111"/><rect x="478" y="36" width="8" height="20" fill="#111"/>
<rect x="402" y="68" width="160" height="14" fill="#111"/>
<rect x="410" y="80" width="148" height="465" fill="#161616"/>
<g fill="#9a9a9a"><rect x="516" y="84" width="28" height="34"/><rect x="516" y="126" width="28" height="34"/><rect x="516" y="168" width="28" height="34"/><rect x="516" y="210" width="28" height="34"/><rect x="516" y="252" width="28" height="34"/><rect x="516" y="294" width="28" height="34"/><rect x="516" y="336" width="28" height="34"/><rect x="476" y="84" width="14" height="26"/><rect x="476" y="124" width="14" height="26"/><rect x="476" y="164" width="14" height="26"/><rect x="476" y="204" width="14" height="26"/><rect x="476" y="244" width="14" height="26"/><rect x="476" y="284" width="14" height="26"/><rect x="476" y="324" width="14" height="26"/></g>
<g fill="#f4f4f4"><rect x="424" y="86" width="26" height="32"/><rect x="424" y="128" width="26" height="32"/><rect x="424" y="170" width="26" height="32"/><rect x="424" y="212" width="26" height="32"/><rect x="424" y="254" width="26" height="32"/><rect x="424" y="296" width="26" height="32"/><rect x="424" y="338" width="26" height="32"/></g>
</g></svg><div class="cap"></div></div>
<div class="card" style="left:297px;top:686px"><svg viewBox="0 0 266 150" preserveAspectRatio="none"><g transform="scale(0.2781) translate(-996 0)">
<rect x="996" width="960" height="545" fill="#3a98d8"/>
<rect x="1345" y="0" width="20" height="40" fill="#e8a818"/>
<rect x="1018" y="46" width="675" height="20" fill="#5a5a5e"/>
<rect x="1228" y="36" width="255" height="20" fill="#fdb913"/>
<rect x="1052" y="66" width="608" height="480" fill="#fff"/>
<text x="1085" y="148" font-size="34" fill="#222" textLength="420" lengthAdjust="spacing">一、什么是双支柱调控框架</text>
<text x="1085" y="256" font-size="34" fill="#222" textLength="520" lengthAdjust="spacing">二、为什么要健全双支柱调控框架</text>
<text x="1085" y="366" font-size="34" fill="#222" textLength="450" lengthAdjust="spacing">三、如何健全双支柱调控框架</text>
<path d="M1780 200C1770 120 1840 70 1900 90C1960 90 1960 200 1960 260V360H1800Z" fill="#7a4a2a"/>
<path d="M1795 215C1800 160 1850 140 1890 150C1925 160 1935 210 1925 260C1910 300 1880 320 1855 318C1820 310 1795 270 1795 215Z" fill="#fbdcc4"/>
<circle cx="1812" cy="208" r="10" fill="#2a1a1a"/><circle cx="1865" cy="208" r="10" fill="#2a1a1a"/>
<path d="M1828 250Q1840 258 1852 248" stroke="#d8402a" stroke-width="5" fill="none"/>
<path d="M1790 330C1810 300 1900 300 1930 320L1960 360H1770Z" fill="#3a4a7a"/>
<path d="M1830 300H1870L1880 360H1825Z" fill="#fff"/>
<path d="M1715 275L1760 280L1800 330L1780 350L1745 300Z" fill="#3a4a7a"/><path d="M1712 270L1745 275L1750 295L1720 290Z" fill="#fbdcc4"/>
</g></svg><div class="cap"></div></div>
<div class="card" style="left:574px;top:686px"><svg viewBox="0 0 266 150" preserveAspectRatio="none"><g transform="scale(0.2781)">
<rect width="960" height="545" fill="#dcece0"/>
<path d="M0 0H610C640 30 700 60 690 120C740 160 760 200 740 260C780 320 760 400 720 545H0Z" fill="#5a8a24"/>
<path d="M120 20C200 0 300 40 280 100C200 120 140 90 120 20ZM470 20C520 0 580 20 600 60C560 90 500 70 470 20ZM520 140C580 120 640 140 660 190C600 210 540 190 520 140ZM140 140C180 120 220 160 210 210C170 200 150 180 140 140Z" fill="#6a9a30" opacity=".8"/>
<path d="M60 160C90 260 100 400 80 545H0V300C30 260 50 200 60 160ZM110 240L160 330L120 545H90Z" fill="#c87a28"/>
<g fill="#c8cc2c"><circle cx="80" cy="40" r="42"/><circle cx="150" cy="30" r="36"/><circle cx="403" cy="100" r="52"/><circle cx="540" cy="280" r="40"/><circle cx="600" cy="275" r="30"/></g>
<g fill="#dce04c"><circle cx="70" cy="30" r="20"/><circle cx="390" cy="85" r="26"/><circle cx="530" cy="268" r="18"/></g>
<path d="M650 300C650 230 700 195 750 195C810 195 850 240 848 310V545H650Z" fill="#5a2a30"/>
<path d="M650 300C720 280 790 280 848 305V330C790 310 720 310 650 330Z" fill="#8a7ac8"/>
<path d="M640 330C720 300 790 300 855 325V545H640Z" fill="#0a0a0a"/>
<ellipse cx="705" cy="352" rx="26" ry="16" fill="#fff"/><ellipse cx="800" cy="350" rx="26" ry="16" fill="#fff"/>
<path d="M600 330L640 320L645 345Z" fill="#0a0a0a"/>
<text x="880" y="190" font-size="130" font-weight="900" fill="#f2981c" text-anchor="middle" transform="rotate(14 880 150)" font-family="'Liberation Sans',sans-serif">?</text>
<text x="295" y="240" font-size="92" font-weight="900" fill="#f2a040" text-anchor="middle" textLength="262" lengthAdjust="spacingAndGlyphs">核桃的</text>
<text x="310" y="385" font-size="96" font-weight="900" fill="#f2a040" text-anchor="middle" textLength="520" lengthAdjust="spacingAndGlyphs">正确打开方式</text>
</g></svg><div class="cap"></div></div>
<div class="card" style="left:851px;top:686px"><svg viewBox="0 0 266 150" preserveAspectRatio="none"><defs><linearGradient id="g21" x1="0" y1="0" x2="0" y2="1"><stop offset="0" stop-color="#8ec4ec"/><stop offset=".5" stop-color="#d4e8f6"/><stop offset="1" stop-color="#eef4f8"/></linearGradient></defs>
<g transform="scale(0.2781) translate(-996 0)">
<rect x="996" width="960" height="545" fill="url(#g21)"/>
<g fill="#fff" opacity=".85"><ellipse cx="1740" cy="70" rx="90" ry="30"/><ellipse cx="1800" cy="50" rx="40" ry="28"/><ellipse cx="1810" cy="130" rx="50" ry="22"/></g>
<rect x="1088" y="222" width="70" height="140" fill="#b8946a"/><rect x="1100" y="212" width="50" height="150" fill="#c8a478" opacity=".7"/>
<path d="M1345 230L1370 200V360H1345Z" fill="#c8b4b8"/><rect x="1370" y="255" width="65" height="105" fill="#c0aab0"/>
<rect x="1192" y="288" width="65" height="75" fill="#c8d0d8"/><path d="M1185 290L1225 275L1265 290Z" fill="#8a94a0"/>
<rect x="1527" y="212" width="60" height="150" fill="#d4d8dc"/><rect x="1535" y="222" width="44" height="14" fill="#e8d080"/>
<rect x="1440" y="300" width="80" height="60" fill="#c4ccd4"/>
<ellipse cx="1140" cy="335" rx="35" ry="30" fill="#6a9a80"/>
<rect x="1260" y="320" width="90" height="40" fill="#a8b4c0"/>
<path d="M1690 360V280L1705 270M1725 360V265L1738 258M1650 360V300L1662 292M1615 360V315" stroke="#4a5058" stroke-width="5" fill="none"/>
<path d="M1760 310H1810L1800 340H1770Z" fill="#1a2a3a"/><rect x="1782" y="290" width="6" height="20" fill="#1a2a3a"/>
<g font-weight="900" fill="#fff" text-anchor="middle"><text x="1478" y="88" font-size="72" textLength="620" lengthAdjust="spacingAndGlyphs">三峡大学科技学院</text><text x="1478" y="188" font-size="72" textLength="540" lengthAdjust="spacingAndGlyphs">物联网工程专业</text></g>
</g></svg><div class="cap"></div></div>
<div class="card" style="left:1128px;top:686px"><svg viewBox="0 0 266 150" preserveAspectRatio="none"><g transform="scale(0.2781)">
<rect width="960" height="545" fill="#94e0f4"/>
<g fill="#fff"><path d="M30 55C40 30 70 30 80 20C110 0 150 15 155 40C185 40 195 55 190 58Z"/><path d="M360 100C370 75 400 75 410 60C440 40 480 55 490 80C520 80 530 100 525 104Z"/><path d="M820 75C830 45 860 50 870 40C895 25 925 35 930 55V80Z"/></g>
<path d="M150 100C160 60 200 35 240 30V350H150Z" fill="#7ac4d8"/>
<path d="M150 130H240M150 170H240M150 210H240" stroke="#a8dce8" stroke-width="10"/>
<rect x="20" y="100" width="105" height="260" fill="#6ab8d4"/>
<rect x="0" y="150" width="30" height="200" fill="#8acce0"/>
<rect x="925" y="25" width="35" height="330" fill="#7ac8dc"/>
<rect x="755" y="80" width="165" height="280" fill="#5ab4d4"/>
<path d="M800 95H870L940 175V360H800Z" fill="#2a8ad0"/>
<path d="M800 120H890M800 150H915M800 180H940M800 210H940M800 240H940" stroke="#1a6ab8" stroke-width="10"/>
<rect x="15" y="225" width="100" height="135" fill="#2a8ad0"/>
<path d="M15 250H115M15 280H115M15 310H115" stroke="#1a6ab8" stroke-width="10"/>
<rect x="95" y="180" width="115" height="180" fill="#f4f8fa"/>
<g fill="#3a9ad8"><rect x="128" y="195" width="75" height="14"/><rect x="128" y="217" width="75" height="14"/><rect x="128" y="239" width="75" height="14"/><rect x="128" y="261" width="75" height="14"/><rect x="128" y="283" width="75" height="14"/><rect x="128" y="305" width="75" height="14"/></g>
<rect x="215" y="125" width="35" height="235" fill="#f4f8fa"/>
<g fill="#3a9ad8"><rect x="222" y="145" width="22" height="12"/><rect x="222" y="165" width="22" height="12"/><rect x="222" y="185" width="22" height="12"/><rect x="222" y="205" width="22" height="12"/></g>
<rect x="725" y="125" width="100" height="235" fill="#f4f8fa"/><rect x="800" y="125" width="28" height="235" fill="#c4c8cc"/>
<g fill="#3a9ad8"><rect x="735" y="140" width="55" height="13"/><rect x="735" y="160" width="55" height="13"/><rect x="735" y="180" width="55" height="13"/><rect x="735" y="200" width="55" height="13"/><rect x="735" y="220" width="55" height="13"/><rect x="735" y="240" width="55" height="13"/><rect x="735" y="260" width="55" height="13"/></g>
<rect x="845" y="180" width="80" height="180" fill="#f4f8fa"/>
<g fill="#3a9ad8"><rect x="865" y="198" width="52" height="12"/><rect x="865" y="218" width="52" height="12"/><rect x="865" y="238" width="52" height="12"/><rect x="865" y="258" width="52" height="12"/><rect x="865" y="278" width="52" height="12"/><rect x="865" y="298" width="52" height="12"/></g>
<g fill="#f4a850"><ellipse cx="115" cy="335" rx="48" ry="48"/><ellipse cx="225" cy="290" rx="32" ry="70"/><ellipse cx="765" cy="320" rx="42" ry="45"/><ellipse cx="935" cy="275" rx="35" ry="85"/></g>
<path d="M115 320V360M225 280V360M765 310V360M935 270V360" stroke="#8a4a2a" stroke-width="4"/>
<rect x="248" y="118" width="470" height="245" fill="#fff"/>
<rect x="712" y="120" width="12" height="243" fill="#e84a3a"/>
<g font-weight="900" fill="#d4201c" text-anchor="middle" font-size="88"><text x="478" y="208" textLength="392" lengthAdjust="spacingAndGlyphs">抗击病毒</text><text x="478" y="312" textLength="392" lengthAdjust="spacingAndGlyphs">人人有责</text></g>
</g></svg><div class="cap"></div></div>
<div class="card" style="left:1405px;top:686px"><svg viewBox="0 0 266 150" preserveAspectRatio="none"><defs><linearGradient id="g23" x1="0" y1="0" x2="0" y2="1"><stop offset="0" stop-color="#5a9ad0"/><stop offset=".3" stop-color="#9cc8ec"/><stop offset=".6" stop-color="#dcecf8"/><stop offset=".62" stop-color="#c4daea"/><stop offset="1" stop-color="#dce8f2"/></linearGradient><radialGradient id="s23"><stop offset="0" stop-color="#fff"/><stop offset=".25" stop-color="#fff" stop-opacity=".9"/><stop offset="1" stop-color="#fff" stop-opacity="0"/></radialGradient></defs>
<g transform="scale(0.2781) translate(-996 0)">
<rect x="996" width="960" height="545" fill="url(#g23)"/>
<g fill="#eef4fa" opacity=".85"><ellipse cx="1100" cy="90" rx="70" ry="40"/><ellipse cx="1060" cy="40" rx="60" ry="25"/><ellipse cx="1680" cy="40" rx="110" ry="35"/><ellipse cx="1820" cy="60" rx="100" ry="30"/><ellipse cx="1320" cy="170" rx="90" ry="25"/><ellipse cx="1030" cy="210" rx="40" ry="18"/><ellipse cx="1250" cy="30" rx="90" ry="22"/></g>
<circle cx="1165" cy="65" r="75" fill="url(#s23)"/>
<path d="M1165 65L1000 130M1165 65L1080 250M1165 65L1270 180M1165 65L1330 110M1165 65L1250 10M1165 65L1060 10" stroke="#fff" stroke-width="2.500" opacity=".8"/>
<g fill="#fff"><path d="M1545 90L1560 65L1565 85ZM1690 80L1700 55L1708 75ZM1800 60L1830 45L1835 60ZM1715 110L1725 95L1728 108ZM1745 40L1760 20L1765 35Z"/></g>
<path d="M1010 265H1040V245H1055V265H1130V250H1150V265H1200V275H1010Z" fill="#a8c8e4" opacity=".8"/>
<path d="M1490 300C1530 270 1580 255 1600 260C1640 245 1700 250 1730 275C1750 290 1760 300 1770 310H1490Z" fill="#4a8a6a"/>
<path d="M1480 310C1560 295 1700 295 1780 312L1760 325H1500Z" fill="#7aa8b0"/>
<rect x="996" y="318" width="960" height="50" fill="#c8dcec" opacity=".7"/>
<g font-weight="900" fill="#d0241c" stroke="#fff" stroke-width="1.500" paint-order="stroke" text-anchor="middle"><text x="1472" y="222" font-size="50" textLength="600" lengthAdjust="spacingAndGlyphs">崇尚科学 反对邪教</text><text x="1472" y="338" font-size="70" textLength="400" lengthAdjust="spacingAndGlyphs">幸福生活</text></g>
</g></svg><div class="cap"></div></div>
<div class="abs" style="left:1683px;top:52px;width:2px;height:285px;background:#3565a2"></div>
</div>

<div id="pager">
<div class="c" style="left:-1px;width:68px;color:#ccc">上一页</div>
<div class="on" style="left:66px;width:39px">1</div>
<div style="left:105px;width:38px">2</div>
<div style="left:143px;width:38px">3</div>
<div style="left:181px;width:38px">4</div>
<div style="left:219px;width:38px">5</div>
<div style="left:257px;width:43px">...</div>
<div style="left:300px;width:45px">35</div>
<div class="c" style="left:345px;width:67px;border-right:none">下一页</div>
</div>
</body>
</html>
